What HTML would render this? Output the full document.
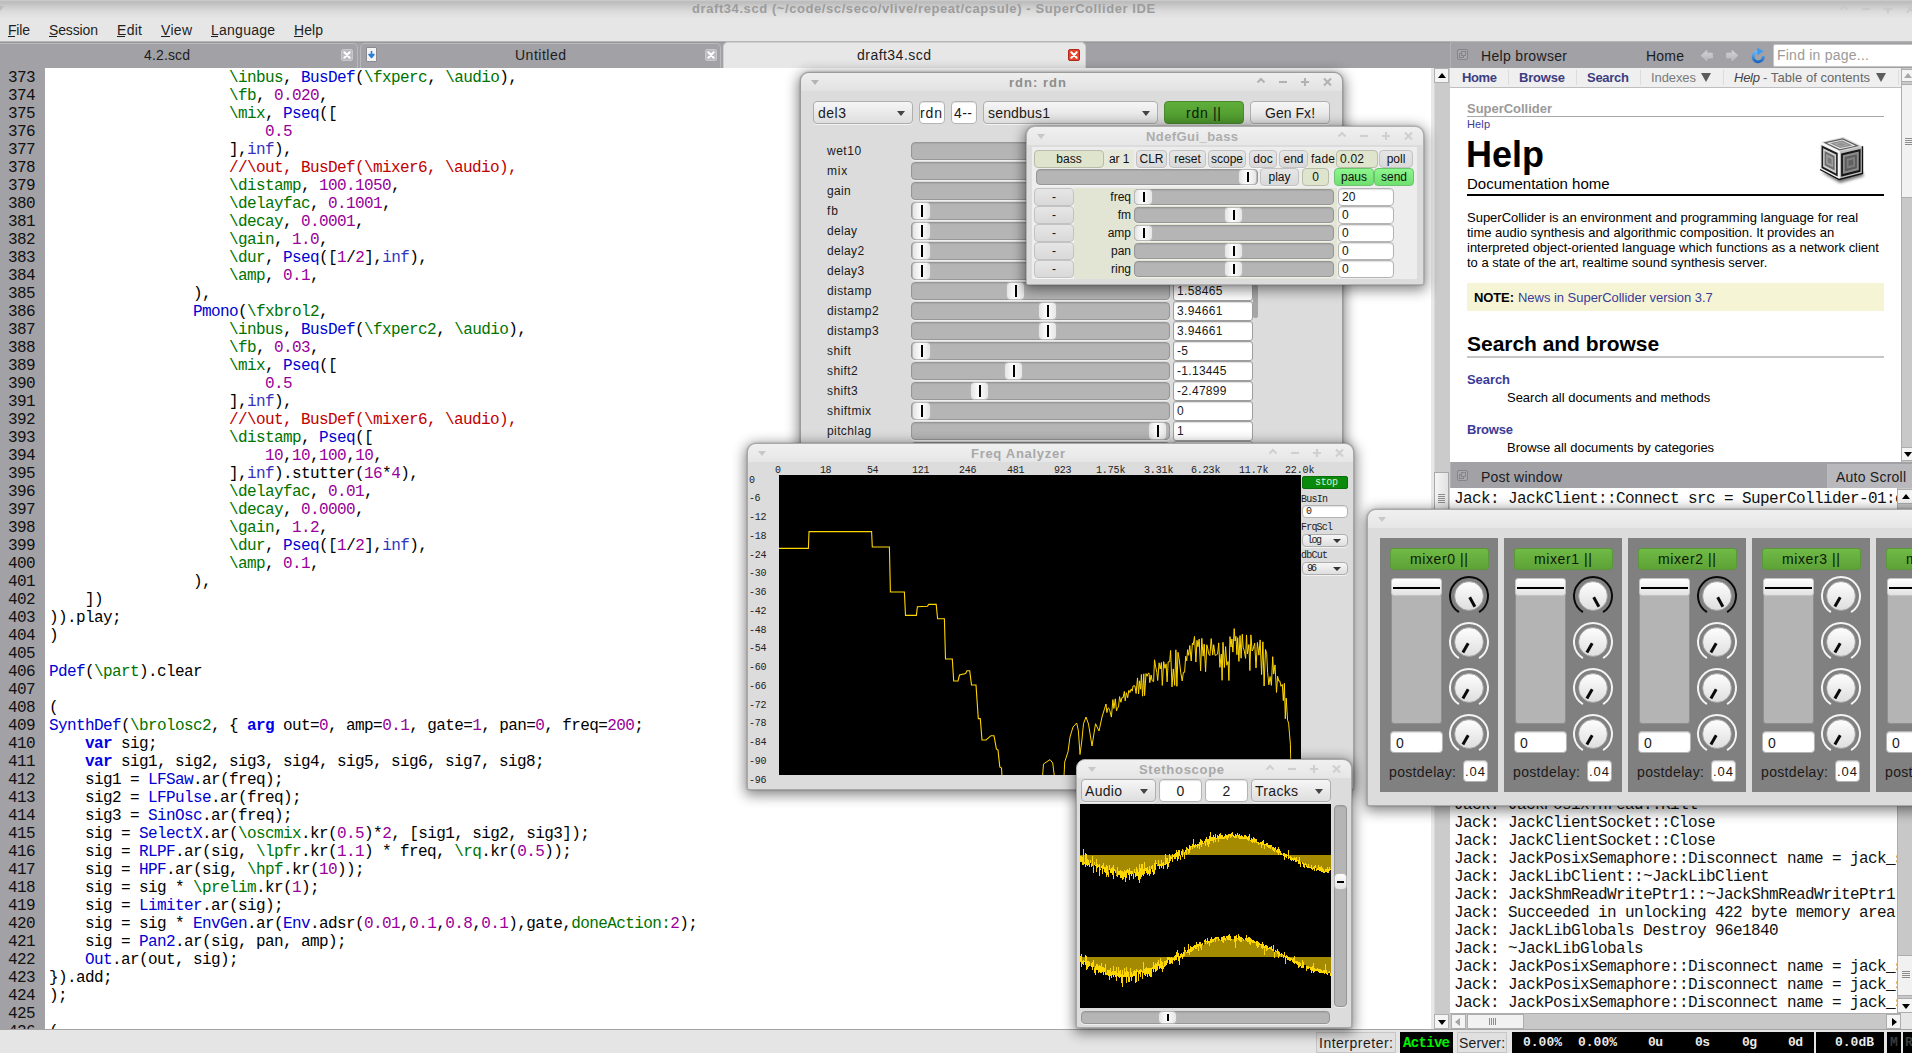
<!DOCTYPE html><html><head><meta charset="utf-8"><title>SuperCollider IDE</title><style>
*{box-sizing:border-box;margin:0;padding:0}
html,body{width:1912px;height:1053px;overflow:hidden;background:#e6e6e6}
body{font-family:"Liberation Sans",sans-serif;position:relative}
i{font-style:normal}
#root{position:absolute;left:0;top:0;width:1912px;height:1053px;overflow:hidden}
.mono{font-family:"Liberation Mono",monospace}
.code{position:absolute;white-space:pre;font-family:"Liberation Mono",monospace;font-size:16px;letter-spacing:-0.6px;line-height:18px;color:#000}
.cm{color:#c00000}.sy{color:#007300}.nu{color:#98009a}.cl{color:#0000d2}.kw{color:#0000e6;font-weight:bold}.bi{color:#3333bf}
.win{position:absolute;background:#dcdcdc;border:1px solid #9c9c9c;border-radius:9px 9px 2px 2px;box-shadow:0 3px 13px 2px rgba(0,0,0,.48),0 0 2px rgba(0,0,0,.35);overflow:hidden}
.wt{position:absolute;left:0;top:0;right:0;height:18px;background:linear-gradient(#eeeeee,#e2e2e2);border-radius:8px 8px 0 0}
.sl{position:absolute;background:#b5b5b5;border:1px solid #979797;border-radius:4px;box-shadow:inset 0 1px 1px rgba(0,0,0,.08),0 1px 0 rgba(255,255,255,.5)}
.kn{position:absolute;background:linear-gradient(90deg,#e4e4e4,#fdfdfd 45%,#e6e6e6);border:1px solid #b9b9b9;border-radius:4px}
.kn:after{content:"";position:absolute;left:50%;top:2px;bottom:2px;width:2px;margin-left:-1px;background:#000}
.fd{position:absolute;background:#fff;border:1px solid #b4b4b4;border-radius:4px;box-shadow:inset 0 1px 1px rgba(0,0,0,.12)}
.bt{position:absolute;background:linear-gradient(#f6f6f6,#dedede);border:1px solid #aeaeae;border-radius:4px;box-shadow:0 1px 0 rgba(255,255,255,.6)}
</style></head><body><div id="root">
<div style="position:absolute;left:0px;top:0px;width:1912px;height:18px;background:linear-gradient(#cfcfcf 0,#bbbbbb 10%,#c9c9c9 32%,#dadada 62%,#e4e4e4 95%);"></div>
<div style="position:absolute;white-space:pre;left:692px;top:1.0px;height:16px;line-height:16px;font-size:13px;color:#9c9c9c;font-weight:bold;letter-spacing:0.58px;">draft34.scd (~/code/sc/seco/vlive/repeat/capsule) - SuperCollider IDE</div>
<svg style="position:absolute;left:1835.5px;top:2px" width="82.5" height="14" viewBox="1835.5 2 82.5 14" fill="none" stroke="#c9c9c9" stroke-width="2.1"><path d="M1840.0 9.5L1843.5 6L1847.0 9.5"/><path d="M1861.5 9H1869.5"/><path d="M1883.5 9H1891.5M1887.5 5V13"/><path d="M1906.5 5.5L1913.5 12.5M1913.5 5.5L1906.5 12.5"/></svg>
<div style="position:absolute;left:-4px;top:6px;width:0px;height:0px;border:4.5px solid transparent;border-top:5px solid #bcbcbc;border-bottom:none;"></div>
<div style="position:absolute;left:0px;top:18px;width:1912px;height:23px;background:#e6e6e6;"></div>
<div style="position:absolute;left:0px;top:41px;width:1912px;height:1px;background:#b4b4b4;"></div>
<div style="position:absolute;white-space:pre;left:8px;top:20.5px;height:18px;line-height:18px;font-size:14px;color:#1e1e1e;letter-spacing:-0.19px;text-decoration:none;">File</div>
<div style="position:absolute;left:8px;top:36px;width:7px;height:1px;background:#1e1e1e;"></div>
<div style="position:absolute;white-space:pre;left:49px;top:20.5px;height:18px;line-height:18px;font-size:14px;color:#1e1e1e;letter-spacing:-0.13px;text-decoration:none;">Session</div>
<div style="position:absolute;left:49px;top:36px;width:8px;height:1px;background:#1e1e1e;"></div>
<div style="position:absolute;white-space:pre;left:117px;top:20.5px;height:18px;line-height:18px;font-size:14px;color:#1e1e1e;letter-spacing:0.29px;text-decoration:none;">Edit</div>
<div style="position:absolute;left:117px;top:36px;width:8px;height:1px;background:#1e1e1e;"></div>
<div style="position:absolute;white-space:pre;left:161px;top:20.5px;height:18px;line-height:18px;font-size:14px;color:#1e1e1e;letter-spacing:0.30px;text-decoration:none;">View</div>
<div style="position:absolute;left:161px;top:36px;width:9px;height:1px;background:#1e1e1e;"></div>
<div style="position:absolute;white-space:pre;left:211px;top:20.5px;height:18px;line-height:18px;font-size:14px;color:#1e1e1e;letter-spacing:0.25px;text-decoration:none;">Language</div>
<div style="position:absolute;left:211px;top:36px;width:7px;height:1px;background:#1e1e1e;"></div>
<div style="position:absolute;white-space:pre;left:294px;top:20.5px;height:18px;line-height:18px;font-size:14px;color:#1e1e1e;letter-spacing:0.07px;text-decoration:none;">Help</div>
<div style="position:absolute;left:294px;top:36px;width:9px;height:1px;background:#1e1e1e;"></div>
<div style="position:absolute;left:0px;top:42px;width:1912px;height:26px;background:#a2a1a6;"></div>
<div style="position:absolute;left:0px;top:42px;width:1912px;height:1px;background:#98979c;"></div>
<div style="position:absolute;left:-5px;top:43px;width:363px;height:25px;border:1px solid #b9b8bd;border-bottom:none;border-radius:5px 5px 0 0;"></div>
<div style="position:absolute;left:360px;top:43px;width:361px;height:25px;border:1px solid #b9b8bd;border-bottom:none;border-radius:5px 5px 0 0;"></div>
<div style="position:absolute;left:723px;top:42px;width:363px;height:26px;background:#e7e7e7;border-radius:5px 5px 0 0;border:1px solid #cfcfcf;border-bottom:none;"></div>
<div style="position:absolute;white-space:pre;left:144px;top:46.0px;height:18px;line-height:18px;font-size:14px;color:#1c1c1c;letter-spacing:0.14px;">4.2.scd</div>
<div style="position:absolute;white-space:pre;left:515px;top:46.0px;height:18px;line-height:18px;font-size:14px;color:#1c1c1c;letter-spacing:0.50px;">Untitled</div>
<div style="position:absolute;white-space:pre;left:857px;top:46.0px;height:18px;line-height:18px;font-size:14px;color:#1c1c1c;letter-spacing:0.47px;">draft34.scd</div>
<div style="position:absolute;left:341px;top:49px;width:12px;height:12px;background:#bcbbbf;border:1px solid #c9c8cc;border-radius:2px;"><svg width="10" height="10" viewBox="0 0 10 10" style="position:absolute;left:0;top:0"><path d="M2.300 2.300L7.700 7.700M7.700 2.300L2.300 7.700" stroke="#fff" stroke-width="2" stroke-linecap="round"/></svg></div>
<div style="position:absolute;left:705px;top:49px;width:12px;height:12px;background:#bcbbbf;border:1px solid #c9c8cc;border-radius:2px;"><svg width="10" height="10" viewBox="0 0 10 10" style="position:absolute;left:0;top:0"><path d="M2.300 2.300L7.700 7.700M7.700 2.300L2.300 7.700" stroke="#fff" stroke-width="2" stroke-linecap="round"/></svg></div>
<div style="position:absolute;left:1068px;top:49px;width:12px;height:12px;background:#e8412c;border:1px solid #b02a1a;border-radius:2px;"><svg width="10" height="10" viewBox="0 0 10 10" style="position:absolute;left:0;top:0"><path d="M2.300 2.300L7.700 7.700M7.700 2.300L2.300 7.700" stroke="#fff" stroke-width="2" stroke-linecap="round"/></svg></div>
<div style="position:absolute;left:366px;top:47px;width:11px;height:15px;background:#f4f4f4;border:1px solid #8a8a90;border-radius:1px;"><svg width="9" height="13" viewBox="0 0 9 13" style="position:absolute;left:0;top:0"><path d="M4.5 3v5M2 6.5l2.5 3l2.5-3z" stroke="#2a7fd4" stroke-width="1.6" fill="#2a7fd4" stroke-linejoin="round"/></svg></div>
<div style="position:absolute;left:0px;top:68px;width:45px;height:961px;background:#a2a1a6;"></div>
<div style="position:absolute;left:45px;top:68px;width:1389px;height:961px;background:#fff;"></div>
<div style="position:absolute;left:0;top:67px;width:1434px;height:962px;overflow:hidden"><div class="code" style="left:8px;top:1.5px;color:#111">373
374
375
376
377
378
379
380
381
382
383
384
385
386
387
388
389
390
391
392
393
394
395
396
397
398
399
400
401
402
403
404
405
406
407
408
409
410
411
412
413
414
415
416
417
418
419
420
421
422
423
424
425
426</div><div class="code" style="left:49px;top:1.5px">                    <i class="sy">\inbus</i>, <i class="cl">BusDef</i>(<i class="sy">\fxperc</i>, <i class="sy">\audio</i>),
                    <i class="sy">\fb</i>, <i class="nu">0.020</i>,
                    <i class="sy">\mix</i>, <i class="cl">Pseq</i>([
                        <i class="nu">0.5</i>
                    ],<i class="bi">inf</i>),
                    <i class="cm">//\out, BusDef(\mixer6, \audio),</i>
                    <i class="sy">\distamp</i>, <i class="nu">100.1050</i>,
                    <i class="sy">\delayfac</i>, <i class="nu">0.1001</i>,
                    <i class="sy">\decay</i>, <i class="nu">0.0001</i>,
                    <i class="sy">\gain</i>, <i class="nu">1.0</i>,
                    <i class="sy">\dur</i>, <i class="cl">Pseq</i>([<i class="nu">1</i>/<i class="nu">2</i>],<i class="bi">inf</i>),
                    <i class="sy">\amp</i>, <i class="nu">0.1</i>,
                ),
                <i class="cl">Pmono</i>(<i class="sy">\fxbrol2</i>,
                    <i class="sy">\inbus</i>, <i class="cl">BusDef</i>(<i class="sy">\fxperc2</i>, <i class="sy">\audio</i>),
                    <i class="sy">\fb</i>, <i class="nu">0.03</i>,
                    <i class="sy">\mix</i>, <i class="cl">Pseq</i>([
                        <i class="nu">0.5</i>
                    ],<i class="bi">inf</i>),
                    <i class="cm">//\out, BusDef(\mixer6, \audio),</i>
                    <i class="sy">\distamp</i>, <i class="cl">Pseq</i>([
                        <i class="nu">10</i>,<i class="nu">10</i>,<i class="nu">100</i>,<i class="nu">10</i>,
                    ],<i class="bi">inf</i>).stutter(<i class="nu">16</i>*<i class="nu">4</i>),
                    <i class="sy">\delayfac</i>, <i class="nu">0.01</i>,
                    <i class="sy">\decay</i>, <i class="nu">0.0000</i>,
                    <i class="sy">\gain</i>, <i class="nu">1.2</i>,
                    <i class="sy">\dur</i>, <i class="cl">Pseq</i>([<i class="nu">1</i>/<i class="nu">2</i>],<i class="bi">inf</i>),
                    <i class="sy">\amp</i>, <i class="nu">0.1</i>,
                ),
    ])
)).play;
)

<i class="cl">Pdef</i>(<i class="sy">\part</i>).clear

(
<i class="cl">SynthDef</i>(<i class="sy">\brolosc2</i>, { <b class="kw">arg</b> out=<i class="nu">0</i>, amp=<i class="nu">0.1</i>, gate=<i class="nu">1</i>, pan=<i class="nu">0</i>, freq=<i class="nu">200</i>;
    <b class="kw">var</b> sig;
    <b class="kw">var</b> sig1, sig2, sig3, sig4, sig5, sig6, sig7, sig8;
    sig1 = <i class="cl">LFSaw</i>.ar(freq);
    sig2 = <i class="cl">LFPulse</i>.ar(freq);
    sig3 = <i class="cl">SinOsc</i>.ar(freq);
    sig = <i class="cl">SelectX</i>.ar(<i class="sy">\oscmix</i>.kr(<i class="nu">0.5</i>)*<i class="nu">2</i>, [sig1, sig2, sig3]);
    sig = <i class="cl">RLPF</i>.ar(sig, <i class="sy">\lpfr</i>.kr(<i class="nu">1.1</i>) * freq, <i class="sy">\rq</i>.kr(<i class="nu">0.5</i>));
    sig = <i class="cl">HPF</i>.ar(sig, <i class="sy">\hpf</i>.kr(<i class="nu">10</i>));
    sig = sig * <i class="sy">\prelim</i>.kr(<i class="nu">1</i>);
    sig = <i class="cl">Limiter</i>.ar(sig);
    sig = sig * <i class="cl">EnvGen</i>.ar(<i class="cl">Env</i>.adsr(<i class="nu">0.01</i>,<i class="nu">0.1</i>,<i class="nu">0.8</i>,<i class="nu">0.1</i>),gate,<i class="sy">doneAction:</i><i class="nu">2</i>);
    sig = <i class="cl">Pan2</i>.ar(sig, pan, amp);
    <i class="cl">Out</i>.ar(out, sig);
}).add;
);

(</div></div>
<div style="position:absolute;left:1434px;top:68px;width:16px;height:961px;background:#cbcbcb;border-left:1px solid #d8d8d8;"></div>
<div style="position:absolute;left:1434px;top:68px;width:15px;height:15px;background:#f4f4f4;border:1px solid #b0b0b0;"><div style="position:absolute;left:3px;top:4px;border:4px solid transparent;border-bottom:5px solid #000;border-top:none"></div></div>
<div style="position:absolute;left:1434px;top:1014px;width:15px;height:15px;background:#f4f4f4;border:1px solid #b0b0b0;"><div style="position:absolute;left:3px;top:5px;border:4px solid transparent;border-top:5px solid #000;border-bottom:none"></div></div>
<div style="position:absolute;left:1434px;top:472px;width:15px;height:53px;background:linear-gradient(90deg,#f4f4f4,#e2e2e2);border:1px solid #a8a8a8;"></div>
<div style="position:absolute;left:1438px;top:494px;width:7px;height:1px;background:#8c8c8c;"></div>
<div style="position:absolute;left:1438px;top:496px;width:7px;height:1px;background:#8c8c8c;"></div>
<div style="position:absolute;left:1438px;top:498px;width:7px;height:1px;background:#8c8c8c;"></div>
<div style="position:absolute;left:1438px;top:500px;width:7px;height:1px;background:#8c8c8c;"></div>
<div style="position:absolute;left:1438px;top:502px;width:7px;height:1px;background:#8c8c8c;"></div>
<div style="position:absolute;left:1431px;top:68px;width:3px;height:961px;background:#e8e8e8;"></div>
<div style="position:absolute;left:0px;top:1029px;width:1912px;height:24px;background:#e5e5e5;border-top:1px solid #a4a4a4;"></div><div style="position:absolute;left:1450px;top:42px;width:462px;height:26px;background:#a2a1a6;border-left:1px solid #b2b1b6;"></div>
<div style="position:absolute;left:1457px;top:49px;width:11px;height:11px;border:1px solid #86858a;border-radius:2px;background:#a8a7ac;"><div style="position:absolute;left:1px;top:3px;width:5px;height:5px;border:1px solid #86858a"></div><div style="position:absolute;left:3px;top:1px;width:5px;height:5px;border:1px solid #86858a;background:#a8a7ac"></div></div>
<div style="position:absolute;white-space:pre;left:1481px;top:46.5px;height:18px;line-height:18px;font-size:14px;color:#1c1c1c;letter-spacing:0.32px;">Help browser</div>
<div style="position:absolute;white-space:pre;left:1646px;top:46.5px;height:18px;line-height:18px;font-size:14px;color:#1c1c1c;letter-spacing:0.22px;">Home</div>
<svg style="position:absolute;left:1700px;top:47px" width="70" height="17" viewBox="0 0 70 17"><defs><linearGradient id="ag" x1="0" y1="0" x2="0" y2="1"><stop offset="0" stop-color="#d6d6d8"/><stop offset="1" stop-color="#b4b4b8"/></linearGradient><linearGradient id="bg" x1="0" y1="0" x2="0" y2="1"><stop offset="0" stop-color="#6ab8ff"/><stop offset="1" stop-color="#1668c4"/></linearGradient></defs><path d="M1 8.5L7 3v3h5.5v5H7v3z" fill="url(#ag)" stroke="#c9c9cc" stroke-width=".6"/><path d="M38 8.5L32 3v3h-5.500v5H32v3z" fill="url(#ag)" stroke="#c9c9cc" stroke-width=".6"/><path d="M63.300 9.200A5.100 5.100 0 1 1 57.800 4.600" fill="none" stroke="url(#bg)" stroke-width="2.800"/><path d="M57 0.500L63.500 4.200L57.500 8.300z" fill="#3d9af0"/></svg>
<div style="position:absolute;left:1773px;top:44px;width:145px;height:23px;background:#fff;border:1px solid #c4c4c4;border-radius:2px;"></div>
<div style="position:absolute;white-space:pre;left:1777px;top:46.0px;height:18px;line-height:18px;font-size:14px;color:#9a9a9a;letter-spacing:0.23px;">Find in page...</div>
<div style="position:absolute;left:1450px;top:68px;width:462px;height:20px;background:#efefef;border-bottom:1px solid #bfbfbf;"></div>
<div style="position:absolute;left:1508px;top:70px;width:1px;height:15px;background:#dcdcdc;"></div>
<div style="position:absolute;left:1576px;top:70px;width:1px;height:15px;background:#dcdcdc;"></div>
<div style="position:absolute;left:1640px;top:70px;width:1px;height:15px;background:#dcdcdc;"></div>
<div style="position:absolute;left:1723px;top:70px;width:1px;height:15px;background:#dcdcdc;"></div>
<div style="position:absolute;left:1898px;top:70px;width:1px;height:15px;background:#dcdcdc;"></div>
<div style="position:absolute;white-space:pre;left:1462px;top:69.5px;height:16px;line-height:16px;font-size:13px;color:#3d3d80;font-weight:bold;letter-spacing:-0.37px;">Home</div>
<div style="position:absolute;white-space:pre;left:1519px;top:69.5px;height:16px;line-height:16px;font-size:13px;color:#3d3d80;font-weight:bold;letter-spacing:-0.19px;">Browse</div>
<div style="position:absolute;white-space:pre;left:1587px;top:69.5px;height:16px;line-height:16px;font-size:13px;color:#3d3d80;font-weight:bold;letter-spacing:-0.27px;">Search</div>
<div style="position:absolute;white-space:pre;left:1651px;top:69.5px;height:16px;line-height:16px;font-size:13px;color:#7a7a7a;letter-spacing:-0.09px;">Indexes</div>
<div style="position:absolute;left:1701px;top:73px;width:0px;height:0px;border:5px solid transparent;border-top:9px solid #5c5c5c;border-bottom:none;"></div>
<div style="position:absolute;white-space:pre;left:1734px;top:69.5px;height:16px;line-height:16px;font-size:13px;color:#444;font-style:italic;letter-spacing:-0.25px;">Help</div>
<div style="position:absolute;white-space:pre;left:1763px;top:69.5px;height:16px;line-height:16px;font-size:13px;color:#666;letter-spacing:0.06px;">- Table of contents</div>
<div style="position:absolute;left:1876px;top:73px;width:0px;height:0px;border:5px solid transparent;border-top:9px solid #5c5c5c;border-bottom:none;"></div>
<div style="position:absolute;left:1450px;top:88px;width:452px;height:374px;background:#fff;"></div>
<div style="position:absolute;white-space:pre;left:1467px;top:100.8px;height:16px;line-height:16px;font-size:13px;color:#9a9a9a;font-weight:bold;letter-spacing:-0.02px;">SuperCollider</div>
<div style="position:absolute;left:1467px;top:116px;width:417px;height:1px;background:#a8a8a8;"></div>
<div style="position:absolute;white-space:pre;left:1467px;top:116.6px;height:14px;line-height:14px;font-size:11px;color:#3b3b98;letter-spacing:0.13px;">Help</div>
<div style="position:absolute;white-space:pre;left:1466px;top:133.5px;height:42px;line-height:42px;font-size:36px;color:#000;font-weight:bold;">Help</div>
<div style="position:absolute;white-space:pre;left:1467px;top:174.0px;height:20px;line-height:20px;font-size:15px;color:#000;">Documentation home</div>
<div style="position:absolute;left:1467px;top:194px;width:417px;height:2px;background:#000;"></div>
<div style="position:absolute;white-space:pre;left:1467px;top:210.0px;height:15px;line-height:15px;font-size:13px;color:#000;letter-spacing:-0.01px;">SuperCollider is an environment and programming language for real</div>
<div style="position:absolute;white-space:pre;left:1467px;top:225.0px;height:15px;line-height:15px;font-size:13px;color:#000;letter-spacing:-0.01px;">time audio synthesis and algorithmic composition. It provides an</div>
<div style="position:absolute;white-space:pre;left:1467px;top:240.0px;height:15px;line-height:15px;font-size:13px;color:#000;letter-spacing:-0.01px;">interpreted object-oriented language which functions as a network client</div>
<div style="position:absolute;white-space:pre;left:1467px;top:255.0px;height:15px;line-height:15px;font-size:13px;color:#000;letter-spacing:-0.02px;">to a state of the art, realtime sound synthesis server.</div>
<div style="position:absolute;left:1467px;top:283px;width:417px;height:28px;background:#f5f5d6;"></div>
<div style="position:absolute;white-space:pre;left:1474px;top:289.5px;height:16px;line-height:16px;font-size:13px;color:#000;font-weight:bold;letter-spacing:-0.11px;">NOTE:</div>
<div style="position:absolute;white-space:pre;left:1518px;top:289.5px;height:16px;line-height:16px;font-size:13px;color:#3b3b98;letter-spacing:-0.03px;">News in SuperCollider version 3.7</div>
<div style="position:absolute;white-space:pre;left:1467px;top:331.0px;height:26px;line-height:26px;font-size:21px;color:#000;font-weight:bold;letter-spacing:-0.03px;">Search and browse</div>
<div style="position:absolute;left:1467px;top:356px;width:417px;height:2px;background:#c6c6c6;"></div>
<div style="position:absolute;white-space:pre;left:1467px;top:371.5px;height:16px;line-height:16px;font-size:13px;color:#3b3b98;font-weight:bold;letter-spacing:-0.07px;">Search</div>
<div style="position:absolute;white-space:pre;left:1507px;top:389.5px;height:16px;line-height:16px;font-size:13px;color:#000;letter-spacing:-0.02px;">Search all documents and methods</div>
<div style="position:absolute;white-space:pre;left:1467px;top:421.5px;height:16px;line-height:16px;font-size:13px;color:#3b3b98;font-weight:bold;letter-spacing:-0.19px;">Browse</div>
<div style="position:absolute;white-space:pre;left:1507px;top:439.5px;height:16px;line-height:16px;font-size:13px;color:#000;letter-spacing:-0.03px;">Browse all documents by categories</div>
<svg style="position:absolute;left:1818px;top:134px" width="50" height="52" viewBox="0 0 50 52"><defs><filter id="cb"><feGaussianBlur stdDeviation="1.4"/></filter></defs><polygon points="3,38 22,49 46,42 44,38 21,40" fill="#000" opacity=".55" filter="url(#cb)"/><polygon points="2.0,8.3 25.2,3.1 44.5,12.3 21.2,17.6" fill="#d8d8d8"/><polygon points="5.4,8.6 24.9,4.3 41.1,12.0 21.5,16.4" fill="#5a5a5a"/><polygon points="8.8,8.9 24.6,5.4 37.7,11.7 21.8,15.3" fill="#e4e4e4"/><polygon points="12.2,9.3 24.3,6.6 34.3,11.4 22.2,14.1" fill="#8a8a8a"/><polygon points="15.6,9.6 23.9,7.7 30.9,11.0 22.5,12.9" fill="#a8a8a8"/><polygon points="19.0,9.9 23.6,8.9 27.5,10.7 22.8,11.8" fill="#8e8e8e"/><polygon points="2.0,8.3 21.2,17.6 21.2,45.5 2.0,35.5" fill="#f2f2f2"/><polygon points="3.5,11.2 19.7,19.1 19.7,42.5 3.5,34.1" fill="#1c1c1c"/><polygon points="5.1,14.2 18.1,20.5 18.1,39.5 5.1,32.7" fill="#d0d0d0"/><polygon points="6.6,17.1 16.6,22.0 16.6,36.5 6.6,31.3" fill="#6c6c6c"/><polygon points="8.1,20.1 15.1,23.4 15.1,33.5 8.1,29.9" fill="#9c9c9c"/><polygon points="9.7,23.0 13.5,24.9 13.5,30.5 9.7,28.5" fill="#7a7a7a"/><polygon points="21.2,17.6 44.5,12.3 44.5,39.5 21.2,45.5" fill="#bdbdbd"/><polygon points="23.1,19.4 42.6,14.9 42.6,37.8 23.1,42.8" fill="#161616"/><polygon points="24.9,21.2 40.8,17.6 40.8,36.1 24.9,40.1" fill="#8c8c8c"/><polygon points="26.8,22.9 38.9,20.2 38.9,34.3 26.8,37.4" fill="#5c5c5c"/><polygon points="28.7,24.7 37.0,22.8 37.0,32.6 28.7,34.8" fill="#7e7e7e"/><polygon points="30.5,26.5 35.2,25.4 35.2,30.9 30.5,32.1" fill="#606060"/><polyline points="2,8.3 21.2,17.6 21.2,45.5" fill="none" stroke="#fafafa" stroke-width="1.2"/><polyline points="2,35.5 21.2,45.5 44.5,39.5 44.5,12.3" fill="none" stroke="#111" stroke-width="1.4"/></svg>
<div style="position:absolute;left:1901px;top:68px;width:12px;height:394px;background:#c8c8c8;border-left:1px solid #adadad;"></div>
<div style="position:absolute;left:1901px;top:69px;width:12px;height:13px;background:#f4f4f4;border:1px solid #adadad;"><div style="position:absolute;left:2px;top:3px;border:4px solid transparent;border-bottom:5px solid #a8a8a8;border-top:none"></div></div>
<div style="position:absolute;left:1901px;top:84px;width:12px;height:114px;background:#f1f1f1;border:1px solid #adadad;"></div>
<div style="position:absolute;left:1905px;top:138px;width:8px;height:1px;background:#8c8c8c;"></div>
<div style="position:absolute;left:1905px;top:140px;width:8px;height:1px;background:#8c8c8c;"></div>
<div style="position:absolute;left:1905px;top:142px;width:8px;height:1px;background:#8c8c8c;"></div>
<div style="position:absolute;left:1905px;top:144px;width:8px;height:1px;background:#8c8c8c;"></div>
<div style="position:absolute;left:1901px;top:447px;width:12px;height:14px;background:#f4f4f4;border:1px solid #adadad;"><div style="position:absolute;left:2px;top:4px;border:4px solid transparent;border-top:5px solid #000;border-bottom:none"></div></div>
<div style="position:absolute;left:1450px;top:462px;width:462px;height:26px;background:#a2a1a6;border-left:1px solid #b2b1b6;"></div>
<div style="position:absolute;left:1457px;top:470px;width:11px;height:11px;border:1px solid #86858a;border-radius:2px;background:#a8a7ac;"><div style="position:absolute;left:1px;top:3px;width:5px;height:5px;border:1px solid #86858a"></div><div style="position:absolute;left:3px;top:1px;width:5px;height:5px;border:1px solid #86858a;background:#a8a7ac"></div></div>
<div style="position:absolute;white-space:pre;left:1481px;top:467.5px;height:18px;line-height:18px;font-size:14px;color:#1c1c1c;letter-spacing:0.24px;">Post window</div>
<div style="position:absolute;left:1827px;top:464px;width:86px;height:24px;background:#b9b8bc;"></div>
<div style="position:absolute;white-space:pre;left:1836px;top:467.5px;height:18px;line-height:18px;font-size:14px;color:#1c1c1c;letter-spacing:0.23px;">Auto Scroll</div>
<div style="position:absolute;left:1450px;top:488px;width:450px;height:525px;background:#fff;"></div>
<div style="position:absolute;left:1450px;top:488px;width:447px;height:525px;overflow:hidden"><div class="code" style="left:4px;top:1.5px;color:#111">Jack: JackClient::Connect src = SuperCollider-01:out_1 dst = system:playback_1
















Jack: JackPosixThread::Kill
Jack: JackClientSocket::Close
Jack: JackClientSocket::Close
Jack: JackPosixSemaphore::Disconnect name = jack_sem.1000_default_SuperCollider
Jack: JackLibClient::~JackLibClient
Jack: JackShmReadWritePtr1::~JackShmReadWritePtr1 1
Jack: Succeeded in unlocking 422 byte memory area
Jack: JackLibGlobals Destroy 96e1840
Jack: ~JackLibGlobals
Jack: JackPosixSemaphore::Disconnect name = jack_sem.1000_default_SuperCollider
Jack: JackPosixSemaphore::Disconnect name = jack_sem.1000_default_SuperCollider
Jack: JackPosixSemaphore::Disconnect name = jack_sem.1000_default_SuperCollider</div></div>
<div style="position:absolute;left:1897px;top:488px;width:16px;height:525px;background:#c8c8c8;border-left:1px solid #adadad;"></div>
<div style="position:absolute;left:1897px;top:489px;width:16px;height:15px;background:#f4f4f4;border:1px solid #adadad;"><div style="position:absolute;left:4px;top:4px;border:4px solid transparent;border-bottom:5px solid #000;border-top:none"></div></div>
<div style="position:absolute;left:1897px;top:955px;width:16px;height:41px;background:#f1f1f1;border:1px solid #adadad;"></div>
<div style="position:absolute;left:1902px;top:971px;width:8px;height:1px;background:#8c8c8c;"></div>
<div style="position:absolute;left:1902px;top:973px;width:8px;height:1px;background:#8c8c8c;"></div>
<div style="position:absolute;left:1902px;top:975px;width:8px;height:1px;background:#8c8c8c;"></div>
<div style="position:absolute;left:1902px;top:977px;width:8px;height:1px;background:#8c8c8c;"></div>
<div style="position:absolute;left:1897px;top:998px;width:16px;height:15px;background:#f4f4f4;border:1px solid #adadad;"><div style="position:absolute;left:4px;top:5px;border:4px solid transparent;border-top:5px solid #000;border-bottom:none"></div></div>
<div style="position:absolute;left:1450px;top:1013px;width:462px;height:16px;background:#c8c8c8;border-top:1px solid #adadad;"></div>
<div style="position:absolute;left:1451px;top:1014px;width:15px;height:15px;background:#f4f4f4;border:1px solid #adadad;"><div style="position:absolute;left:3px;top:3px;border:4px solid transparent;border-right:5px solid #a4a4a4;border-left:none"></div></div>
<div style="position:absolute;left:1467px;top:1014px;width:57px;height:15px;background:#f1f1f1;border:1px solid #adadad;"></div>
<div style="position:absolute;left:1489px;top:1018px;width:1px;height:7px;background:#8c8c8c;"></div>
<div style="position:absolute;left:1491px;top:1018px;width:1px;height:7px;background:#8c8c8c;"></div>
<div style="position:absolute;left:1493px;top:1018px;width:1px;height:7px;background:#8c8c8c;"></div>
<div style="position:absolute;left:1495px;top:1018px;width:1px;height:7px;background:#8c8c8c;"></div>
<div style="position:absolute;left:1886px;top:1014px;width:15px;height:15px;background:#f4f4f4;border:1px solid #adadad;"><div style="position:absolute;left:5px;top:3px;border:4px solid transparent;border-left:5px solid #000;border-right:none"></div></div>
<div style="position:absolute;left:1901px;top:1013px;width:12px;height:16px;background:#e6e6e6;"></div>
<div style="position:absolute;left:1316px;top:1032px;width:80px;height:21px;background:#e0e0e0;border:1px solid #c6c6c6;"></div>
<div style="position:absolute;white-space:pre;left:1319px;top:1033.5px;height:18px;line-height:18px;font-size:14px;color:#1c1c1c;letter-spacing:0.50px;">Interpreter:</div>
<div style="position:absolute;left:1400px;top:1032px;width:53px;height:21px;background:#000;"></div>
<div class="mono" style="position:absolute;white-space:pre;left:1403px;top:1033.5px;height:18px;line-height:18px;font-size:14px;color:#00f000;font-weight:bold;letter-spacing:-0.68px;">Active</div>
<div style="position:absolute;left:1457px;top:1032px;width:50px;height:21px;background:#e0e0e0;border:1px solid #c6c6c6;"></div>
<div style="position:absolute;white-space:pre;left:1459px;top:1033.5px;height:18px;line-height:18px;font-size:14px;color:#1c1c1c;letter-spacing:0.15px;">Server:</div>
<div style="position:absolute;left:1512px;top:1032px;width:372px;height:21px;background:#000;"></div>
<div style="position:absolute;left:1814px;top:1032px;width:2px;height:21px;background:#e6e6e6;"></div>
<div class="mono" style="position:absolute;white-space:pre;left:1523px;top:1034.5px;height:16px;line-height:16px;font-size:13px;color:#ececec;font-weight:bold;letter-spacing:-0.00px;">0.00%</div>
<div class="mono" style="position:absolute;white-space:pre;left:1578px;top:1034.5px;height:16px;line-height:16px;font-size:13px;color:#ececec;font-weight:bold;letter-spacing:-0.00px;">0.00%</div>
<div class="mono" style="position:absolute;white-space:pre;left:1648px;top:1034.5px;height:16px;line-height:16px;font-size:13px;color:#ececec;font-weight:bold;letter-spacing:-0.60px;">0u</div>
<div class="mono" style="position:absolute;white-space:pre;left:1695px;top:1034.5px;height:16px;line-height:16px;font-size:13px;color:#ececec;font-weight:bold;letter-spacing:-0.60px;">0s</div>
<div class="mono" style="position:absolute;white-space:pre;left:1742px;top:1034.5px;height:16px;line-height:16px;font-size:13px;color:#ececec;font-weight:bold;letter-spacing:-0.60px;">0g</div>
<div class="mono" style="position:absolute;white-space:pre;left:1788px;top:1034.5px;height:16px;line-height:16px;font-size:13px;color:#ececec;font-weight:bold;letter-spacing:-0.60px;">0d</div>
<div class="mono" style="position:absolute;white-space:pre;left:1835px;top:1034.5px;height:16px;line-height:16px;font-size:13px;color:#ececec;font-weight:bold;letter-spacing:-0.00px;">0.0dB</div>
<div style="position:absolute;left:1887px;top:1032px;width:14px;height:21px;background:#000;"></div>
<div class="mono" style="position:absolute;white-space:pre;left:1890px;top:1034.5px;height:16px;line-height:16px;font-size:13px;color:#3c3c3c;font-weight:bold;">M</div>
<div style="position:absolute;left:1903px;top:1032px;width:12px;height:21px;background:#000;"></div>
<div class="mono" style="position:absolute;white-space:pre;left:1905px;top:1034.5px;height:16px;line-height:16px;font-size:13px;color:#3c3c3c;font-weight:bold;">R</div><div class="win" style="left:800px;top:72px;width:543px;height:380px"><div class="wt"></div></div>
<div style="position:absolute;left:811px;top:80px;width:0px;height:0px;border:4.5px solid transparent;border-top:5px solid #b4b4b4;border-bottom:none;"></div>
<div style="position:absolute;white-space:pre;left:1009px;top:74.5px;height:16px;line-height:16px;font-size:13px;color:#8e8e8e;font-weight:bold;letter-spacing:1.03px;">rdn: rdn</div>
<svg style="position:absolute;left:1252.5px;top:75px" width="82.5" height="14" viewBox="1252.5 75 82.5 14" fill="none" stroke="#b2b2b2" stroke-width="2.1"><path d="M1257.0 82.5L1260.5 79L1264.0 82.5"/><path d="M1278.5 82H1286.5"/><path d="M1300.5 82H1308.5M1304.5 78V86"/><path d="M1323.5 78.5L1330.5 85.5M1330.5 78.5L1323.5 85.5"/></svg>
<div class="bt" style="position:absolute;left:813px;top:101px;width:100px;height:23px;"></div>
<div style="position:absolute;white-space:pre;left:818px;top:103.5px;height:18px;line-height:18px;font-size:14px;color:#1a1a1a;letter-spacing:0.51px;">del3</div>
<div style="position:absolute;left:897px;top:111px;width:0px;height:0px;border:4.5px solid transparent;border-top:5px solid #444;border-bottom:none;"></div>
<div class="fd" style="position:absolute;left:919px;top:101px;width:26px;height:23px;"></div>
<div style="position:absolute;white-space:pre;left:920px;top:103.5px;height:18px;line-height:18px;font-size:14px;color:#1a1a1a;letter-spacing:0.88px;">rdn</div>
<div class="fd" style="position:absolute;left:951px;top:101px;width:26px;height:23px;"></div>
<div style="position:absolute;white-space:pre;left:954px;top:103.5px;height:18px;line-height:18px;font-size:14px;color:#1a1a1a;letter-spacing:0.45px;">4--</div>
<div class="bt" style="position:absolute;left:983px;top:101px;width:175px;height:23px;"></div>
<div style="position:absolute;white-space:pre;left:988px;top:103.5px;height:18px;line-height:18px;font-size:14px;color:#1a1a1a;letter-spacing:0.18px;">sendbus1</div>
<div style="position:absolute;left:1142px;top:111px;width:0px;height:0px;border:4.5px solid transparent;border-top:5px solid #444;border-bottom:none;"></div>
<div style="position:absolute;left:1164px;top:101px;width:80px;height:23px;background:linear-gradient(#5fae3a,#4c962c);border:1px solid #4a8a2e;border-radius:4px;"></div>
<div style="position:absolute;white-space:pre;left:1186px;top:103.5px;height:18px;line-height:18px;font-size:14px;color:#0c1a08;letter-spacing:0.72px;">rdn ||</div>
<div class="bt" style="position:absolute;left:1250px;top:101px;width:80px;height:23px;"></div>
<div style="position:absolute;white-space:pre;left:1265px;top:103.5px;height:18px;line-height:18px;font-size:14px;color:#1a1a1a;letter-spacing:0.04px;">Gen Fx!</div>
<div style="position:absolute;white-space:pre;left:827px;top:143.5px;height:15px;line-height:15px;font-size:12px;color:#1a1a1a;letter-spacing:0.51px;">wet10</div>
<div class="sl" style="position:absolute;left:911px;top:142px;width:259px;height:18px;"></div>
<div class="fd" style="position:absolute;left:1173px;top:141px;width:80px;height:20px;border-color:#9e9e9e;border-radius:3px;"></div>
<div style="position:absolute;white-space:pre;left:827px;top:163.5px;height:15px;line-height:15px;font-size:12px;color:#1a1a1a;letter-spacing:0.82px;">mix</div>
<div class="sl" style="position:absolute;left:911px;top:162px;width:259px;height:18px;"></div>
<div class="fd" style="position:absolute;left:1173px;top:161px;width:80px;height:20px;border-color:#9e9e9e;border-radius:3px;"></div>
<div style="position:absolute;white-space:pre;left:827px;top:183.5px;height:15px;line-height:15px;font-size:12px;color:#1a1a1a;letter-spacing:0.35px;">gain</div>
<div class="sl" style="position:absolute;left:911px;top:182px;width:259px;height:18px;"></div>
<div class="fd" style="position:absolute;left:1173px;top:181px;width:80px;height:20px;border-color:#9e9e9e;border-radius:3px;"></div>
<div style="position:absolute;white-space:pre;left:827px;top:203.5px;height:15px;line-height:15px;font-size:12px;color:#1a1a1a;letter-spacing:0.85px;">fb</div>
<div class="sl" style="position:absolute;left:911px;top:202px;width:259px;height:18px;"></div><div class="kn" style="position:absolute;left:912px;top:202px;width:19px;height:18px;"></div>
<div class="fd" style="position:absolute;left:1173px;top:201px;width:80px;height:20px;border-color:#9e9e9e;border-radius:3px;"></div>
<div style="position:absolute;white-space:pre;left:827px;top:223.5px;height:15px;line-height:15px;font-size:12px;color:#1a1a1a;letter-spacing:0.34px;">delay</div>
<div class="sl" style="position:absolute;left:911px;top:222px;width:259px;height:18px;"></div><div class="kn" style="position:absolute;left:912px;top:222px;width:19px;height:18px;"></div>
<div class="fd" style="position:absolute;left:1173px;top:221px;width:80px;height:20px;border-color:#9e9e9e;border-radius:3px;"></div>
<div style="position:absolute;white-space:pre;left:827px;top:243.5px;height:15px;line-height:15px;font-size:12px;color:#1a1a1a;letter-spacing:0.34px;">delay2</div>
<div class="sl" style="position:absolute;left:911px;top:242px;width:259px;height:18px;"></div><div class="kn" style="position:absolute;left:912px;top:242px;width:19px;height:18px;"></div>
<div class="fd" style="position:absolute;left:1173px;top:241px;width:80px;height:20px;border-color:#9e9e9e;border-radius:3px;"></div>
<div style="position:absolute;white-space:pre;left:827px;top:263.5px;height:15px;line-height:15px;font-size:12px;color:#1a1a1a;letter-spacing:0.34px;">delay3</div>
<div class="sl" style="position:absolute;left:911px;top:262px;width:259px;height:18px;"></div><div class="kn" style="position:absolute;left:912px;top:262px;width:19px;height:18px;"></div>
<div class="fd" style="position:absolute;left:1173px;top:261px;width:80px;height:20px;border-color:#9e9e9e;border-radius:3px;"></div>
<div style="position:absolute;white-space:pre;left:827px;top:283.5px;height:15px;line-height:15px;font-size:12px;color:#1a1a1a;letter-spacing:0.42px;">distamp</div>
<div class="sl" style="position:absolute;left:911px;top:282px;width:259px;height:18px;"></div><div class="kn" style="position:absolute;left:1006px;top:282px;width:19px;height:18px;"></div>
<div class="fd" style="position:absolute;left:1173px;top:281px;width:80px;height:20px;border-color:#9e9e9e;border-radius:3px;"></div>
<div style="position:absolute;white-space:pre;left:1177px;top:283.5px;height:15px;line-height:15px;font-size:12px;color:#1a1a1a;letter-spacing:0.35px;">1.58465</div>
<div style="position:absolute;white-space:pre;left:827px;top:303.5px;height:15px;line-height:15px;font-size:12px;color:#1a1a1a;letter-spacing:0.41px;">distamp2</div>
<div class="sl" style="position:absolute;left:911px;top:302px;width:259px;height:18px;"></div><div class="kn" style="position:absolute;left:1038px;top:302px;width:19px;height:18px;"></div>
<div class="fd" style="position:absolute;left:1173px;top:301px;width:80px;height:20px;border-color:#9e9e9e;border-radius:3px;"></div>
<div style="position:absolute;white-space:pre;left:1177px;top:303.5px;height:15px;line-height:15px;font-size:12px;color:#1a1a1a;letter-spacing:0.35px;">3.94661</div>
<div style="position:absolute;white-space:pre;left:827px;top:323.5px;height:15px;line-height:15px;font-size:12px;color:#1a1a1a;letter-spacing:0.41px;">distamp3</div>
<div class="sl" style="position:absolute;left:911px;top:322px;width:259px;height:18px;"></div><div class="kn" style="position:absolute;left:1038px;top:322px;width:19px;height:18px;"></div>
<div class="fd" style="position:absolute;left:1173px;top:321px;width:80px;height:20px;border-color:#9e9e9e;border-radius:3px;"></div>
<div style="position:absolute;white-space:pre;left:1177px;top:323.5px;height:15px;line-height:15px;font-size:12px;color:#1a1a1a;letter-spacing:0.35px;">3.94661</div>
<div style="position:absolute;white-space:pre;left:827px;top:343.5px;height:15px;line-height:15px;font-size:12px;color:#1a1a1a;letter-spacing:0.44px;">shift</div>
<div class="sl" style="position:absolute;left:911px;top:342px;width:259px;height:18px;"></div><div class="kn" style="position:absolute;left:912px;top:342px;width:19px;height:18px;"></div>
<div class="fd" style="position:absolute;left:1173px;top:341px;width:80px;height:20px;border-color:#9e9e9e;border-radius:3px;"></div>
<div style="position:absolute;white-space:pre;left:1177px;top:343.5px;height:15px;line-height:15px;font-size:12px;color:#1a1a1a;letter-spacing:0.30px;">-5</div>
<div style="position:absolute;white-space:pre;left:827px;top:363.5px;height:15px;line-height:15px;font-size:12px;color:#1a1a1a;letter-spacing:0.42px;">shift2</div>
<div class="sl" style="position:absolute;left:911px;top:362px;width:259px;height:18px;"></div><div class="kn" style="position:absolute;left:1004px;top:362px;width:19px;height:18px;"></div>
<div class="fd" style="position:absolute;left:1173px;top:361px;width:80px;height:20px;border-color:#9e9e9e;border-radius:3px;"></div>
<div style="position:absolute;white-space:pre;left:1177px;top:363.5px;height:15px;line-height:15px;font-size:12px;color:#1a1a1a;letter-spacing:0.30px;">-1.13445</div>
<div style="position:absolute;white-space:pre;left:827px;top:383.5px;height:15px;line-height:15px;font-size:12px;color:#1a1a1a;letter-spacing:0.42px;">shift3</div>
<div class="sl" style="position:absolute;left:911px;top:382px;width:259px;height:18px;"></div><div class="kn" style="position:absolute;left:970px;top:382px;width:19px;height:18px;"></div>
<div class="fd" style="position:absolute;left:1173px;top:381px;width:80px;height:20px;border-color:#9e9e9e;border-radius:3px;"></div>
<div style="position:absolute;white-space:pre;left:1177px;top:383.5px;height:15px;line-height:15px;font-size:12px;color:#1a1a1a;letter-spacing:0.30px;">-2.47899</div>
<div style="position:absolute;white-space:pre;left:827px;top:403.5px;height:15px;line-height:15px;font-size:12px;color:#1a1a1a;letter-spacing:0.48px;">shiftmix</div>
<div class="sl" style="position:absolute;left:911px;top:402px;width:259px;height:18px;"></div><div class="kn" style="position:absolute;left:912px;top:402px;width:19px;height:18px;"></div>
<div class="fd" style="position:absolute;left:1173px;top:401px;width:80px;height:20px;border-color:#9e9e9e;border-radius:3px;"></div>
<div style="position:absolute;white-space:pre;left:1177px;top:403.5px;height:15px;line-height:15px;font-size:12px;color:#1a1a1a;letter-spacing:0.33px;">0</div>
<div style="position:absolute;white-space:pre;left:827px;top:423.5px;height:15px;line-height:15px;font-size:12px;color:#1a1a1a;letter-spacing:0.40px;">pitchlag</div>
<div class="sl" style="position:absolute;left:911px;top:422px;width:259px;height:18px;"></div><div class="kn" style="position:absolute;left:1148px;top:422px;width:19px;height:18px;"></div>
<div class="fd" style="position:absolute;left:1173px;top:421px;width:80px;height:20px;border-color:#9e9e9e;border-radius:3px;"></div>
<div style="position:absolute;white-space:pre;left:1177px;top:423.5px;height:15px;line-height:15px;font-size:12px;color:#1a1a1a;letter-spacing:0.33px;">1</div>
<div class="sl" style="position:absolute;left:911px;top:442px;width:259px;height:18px;"></div>
<div class="fd" style="position:absolute;left:1173px;top:441px;width:80px;height:20px;border-color:#9e9e9e;border-radius:3px;"></div>
<div style="position:absolute;left:1253px;top:285px;width:5px;height:33px;background:#a6a6a6;border-radius:2px;"></div>
<div class="win" style="left:1026px;top:126px;width:398px;height:159px;border-color:#b0b0b0"><div class="wt" style="background:linear-gradient(#f0f0f0,#e6e6e6)"></div></div>
<div style="position:absolute;left:1032px;top:147px;width:385px;height:132px;background:#ededed;"></div>
<div style="position:absolute;left:1037px;top:134px;width:0px;height:0px;border:4.5px solid transparent;border-top:5px solid #c8c8c8;border-bottom:none;"></div>
<div style="position:absolute;white-space:pre;left:1146px;top:128.5px;height:16px;line-height:16px;font-size:13px;color:#adadad;font-weight:bold;letter-spacing:0.42px;">NdefGui_bass</div>
<svg style="position:absolute;left:1333.5px;top:129px" width="82.5" height="14" viewBox="1333.5 129 82.5 14" fill="none" stroke="#cfcfcf" stroke-width="2.1"><path d="M1338.0 136.5L1341.5 133L1345.0 136.5"/><path d="M1359.5 136H1367.5"/><path d="M1381.5 136H1389.5M1385.5 132V140"/><path d="M1404.5 132.5L1411.5 139.5M1411.5 132.5L1404.5 139.5"/></svg>
<div style="position:absolute;left:1034px;top:150px;width:70px;height:18px;background:#dfe4cd;border:1px solid #b8bca8;border-radius:4px;"></div>
<div style="position:absolute;white-space:pre;left:1034px;top:151.0px;height:16px;line-height:16px;font-size:12px;color:#111;text-align:center;width:70px;">bass</div>
<div style="position:absolute;left:1104px;top:150px;width:30px;height:18px;background:#e6e9da;"></div>
<div style="position:absolute;white-space:pre;left:1109px;top:151.5px;height:15px;line-height:15px;font-size:12px;color:#111;letter-spacing:-0.06px;">ar 1</div>
<div class="bt" style="position:absolute;left:1136px;top:150px;width:31px;height:18px;border-color:#c2c2c2;background:linear-gradient(#e6e6e6,#d9d9d9);"></div><div style="position:absolute;white-space:pre;left:1136px;top:151.0px;height:16px;line-height:16px;font-size:12px;color:#111;text-align:center;width:31px;">CLR</div>
<div class="bt" style="position:absolute;left:1169px;top:150px;width:37px;height:18px;border-color:#c2c2c2;background:linear-gradient(#e6e6e6,#d9d9d9);"></div><div style="position:absolute;white-space:pre;left:1169px;top:151.0px;height:16px;line-height:16px;font-size:12px;color:#111;text-align:center;width:37px;">reset</div>
<div class="bt" style="position:absolute;left:1208px;top:150px;width:38px;height:18px;border-color:#c2c2c2;background:linear-gradient(#e6e6e6,#d9d9d9);"></div><div style="position:absolute;white-space:pre;left:1208px;top:151.0px;height:16px;line-height:16px;font-size:12px;color:#111;text-align:center;width:38px;">scope</div>
<div class="bt" style="position:absolute;left:1249px;top:150px;width:28px;height:18px;border-color:#c2c2c2;background:linear-gradient(#e6e6e6,#d9d9d9);"></div><div style="position:absolute;white-space:pre;left:1249px;top:151.0px;height:16px;line-height:16px;font-size:12px;color:#111;text-align:center;width:28px;">doc</div>
<div class="bt" style="position:absolute;left:1279px;top:150px;width:29px;height:18px;border-color:#c2c2c2;background:linear-gradient(#e6e6e6,#d9d9d9);"></div><div style="position:absolute;white-space:pre;left:1279px;top:151.0px;height:16px;line-height:16px;font-size:12px;color:#111;text-align:center;width:29px;">end</div>
<div style="position:absolute;left:1308px;top:150px;width:28px;height:18px;background:#e6e9da;"></div>
<div style="position:absolute;white-space:pre;left:1311px;top:151.5px;height:15px;line-height:15px;font-size:12px;color:#111;letter-spacing:0.22px;">fade</div>
<div style="position:absolute;left:1336px;top:150px;width:42px;height:18px;background:#dfe4cd;border:1px solid #b8bca8;border-radius:4px;"></div>
<div style="position:absolute;white-space:pre;left:1340px;top:151.5px;height:15px;line-height:15px;font-size:12px;color:#111;letter-spacing:0.22px;">0.02</div>
<div class="bt" style="position:absolute;left:1379px;top:150px;width:34px;height:18px;border-color:#c2c2c2;background:linear-gradient(#e6e6e6,#d9d9d9);"></div><div style="position:absolute;white-space:pre;left:1379px;top:151.0px;height:16px;line-height:16px;font-size:12px;color:#111;text-align:center;width:34px;">poll</div>
<div class="sl" style="position:absolute;left:1036px;top:169px;width:222px;height:16px;"></div><div class="kn" style="position:absolute;left:1238px;top:169px;width:19px;height:16px;"></div>
<div class="bt" style="position:absolute;left:1260px;top:168px;width:39px;height:18px;border-color:#c2c2c2;background:linear-gradient(#e6e6e6,#d9d9d9);"></div><div style="position:absolute;white-space:pre;left:1260px;top:169.0px;height:16px;line-height:16px;font-size:12px;color:#111;text-align:center;width:39px;">play</div>
<div style="position:absolute;left:1302px;top:168px;width:27px;height:18px;background:#dfe4cd;border:1px solid #b8bca8;border-radius:4px;"></div>
<div style="position:absolute;white-space:pre;left:1302px;top:169.0px;height:16px;line-height:16px;font-size:12px;color:#111;text-align:center;width:27px;">0</div>
<div style="position:absolute;left:1334px;top:168px;width:40px;height:18px;background:linear-gradient(#8df58d,#6fe06f);border:1px solid #6cc46c;border-radius:4px;"></div>
<div style="position:absolute;white-space:pre;left:1334px;top:169.0px;height:16px;line-height:16px;font-size:12px;color:#111;text-align:center;width:40px;">paus</div>
<div style="position:absolute;left:1374px;top:168px;width:40px;height:18px;background:linear-gradient(#8df58d,#6fe06f);border:1px solid #6cc46c;border-radius:4px;"></div>
<div style="position:absolute;white-space:pre;left:1374px;top:169.0px;height:16px;line-height:16px;font-size:12px;color:#111;text-align:center;width:40px;">send</div>
<div style="position:absolute;left:1074px;top:188px;width:263px;height:91px;background:#e2e5d4;"></div>
<div class="bt" style="position:absolute;left:1034px;top:188px;width:40px;height:18px;border-color:#c2c2c2;background:linear-gradient(#e6e6e6,#d9d9d9);"></div><div style="position:absolute;white-space:pre;left:1034px;top:189.0px;height:16px;line-height:16px;font-size:12px;color:#111;text-align:center;width:40px;">-</div>
<div style="position:absolute;white-space:pre;left:1074px;top:189.0px;height:16px;line-height:16px;font-size:12px;color:#111;text-align:right;width:57px;">freq</div>
<div class="sl" style="position:absolute;left:1134px;top:189px;width:200px;height:16px;"></div><div class="kn" style="position:absolute;left:1134px;top:189px;width:19px;height:16px;"></div>
<div class="fd" style="position:absolute;left:1338px;top:188px;width:56px;height:18px;"></div>
<div style="position:absolute;white-space:pre;left:1342px;top:189.5px;height:15px;line-height:15px;font-size:12px;color:#111;">20</div>
<div class="bt" style="position:absolute;left:1034px;top:206px;width:40px;height:18px;border-color:#c2c2c2;background:linear-gradient(#e6e6e6,#d9d9d9);"></div><div style="position:absolute;white-space:pre;left:1034px;top:207.0px;height:16px;line-height:16px;font-size:12px;color:#111;text-align:center;width:40px;">-</div>
<div style="position:absolute;white-space:pre;left:1074px;top:207.0px;height:16px;line-height:16px;font-size:12px;color:#111;text-align:right;width:57px;">fm</div>
<div class="sl" style="position:absolute;left:1134px;top:207px;width:200px;height:16px;"></div><div class="kn" style="position:absolute;left:1224px;top:207px;width:19px;height:16px;"></div>
<div class="fd" style="position:absolute;left:1338px;top:206px;width:56px;height:18px;"></div>
<div style="position:absolute;white-space:pre;left:1342px;top:207.5px;height:15px;line-height:15px;font-size:12px;color:#111;">0</div>
<div class="bt" style="position:absolute;left:1034px;top:224px;width:40px;height:18px;border-color:#c2c2c2;background:linear-gradient(#e6e6e6,#d9d9d9);"></div><div style="position:absolute;white-space:pre;left:1034px;top:225.0px;height:16px;line-height:16px;font-size:12px;color:#111;text-align:center;width:40px;">-</div>
<div style="position:absolute;white-space:pre;left:1074px;top:225.0px;height:16px;line-height:16px;font-size:12px;color:#111;text-align:right;width:57px;">amp</div>
<div class="sl" style="position:absolute;left:1134px;top:225px;width:200px;height:16px;"></div><div class="kn" style="position:absolute;left:1134px;top:225px;width:19px;height:16px;"></div>
<div class="fd" style="position:absolute;left:1338px;top:224px;width:56px;height:18px;"></div>
<div style="position:absolute;white-space:pre;left:1342px;top:225.5px;height:15px;line-height:15px;font-size:12px;color:#111;">0</div>
<div class="bt" style="position:absolute;left:1034px;top:242px;width:40px;height:18px;border-color:#c2c2c2;background:linear-gradient(#e6e6e6,#d9d9d9);"></div><div style="position:absolute;white-space:pre;left:1034px;top:243.0px;height:16px;line-height:16px;font-size:12px;color:#111;text-align:center;width:40px;">-</div>
<div style="position:absolute;white-space:pre;left:1074px;top:243.0px;height:16px;line-height:16px;font-size:12px;color:#111;text-align:right;width:57px;">pan</div>
<div class="sl" style="position:absolute;left:1134px;top:243px;width:200px;height:16px;"></div><div class="kn" style="position:absolute;left:1224px;top:243px;width:19px;height:16px;"></div>
<div class="fd" style="position:absolute;left:1338px;top:242px;width:56px;height:18px;"></div>
<div style="position:absolute;white-space:pre;left:1342px;top:243.5px;height:15px;line-height:15px;font-size:12px;color:#111;">0</div>
<div class="bt" style="position:absolute;left:1034px;top:260px;width:40px;height:18px;border-color:#c2c2c2;background:linear-gradient(#e6e6e6,#d9d9d9);"></div><div style="position:absolute;white-space:pre;left:1034px;top:261.0px;height:16px;line-height:16px;font-size:12px;color:#111;text-align:center;width:40px;">-</div>
<div style="position:absolute;white-space:pre;left:1074px;top:261.0px;height:16px;line-height:16px;font-size:12px;color:#111;text-align:right;width:57px;">ring</div>
<div class="sl" style="position:absolute;left:1134px;top:261px;width:200px;height:16px;"></div><div class="kn" style="position:absolute;left:1224px;top:261px;width:19px;height:16px;"></div>
<div class="fd" style="position:absolute;left:1338px;top:260px;width:56px;height:18px;"></div>
<div style="position:absolute;white-space:pre;left:1342px;top:261.5px;height:15px;line-height:15px;font-size:12px;color:#111;">0</div><div class="win" style="left:747px;top:443px;width:607px;height:347px;border-color:#a8a8a8"><div class="wt" style="background:linear-gradient(#f0f0f0,#e6e6e6)"></div></div>
<div style="position:absolute;left:758px;top:451px;width:0px;height:0px;border:4.5px solid transparent;border-top:5px solid #c8c8c8;border-bottom:none;"></div>
<div style="position:absolute;white-space:pre;left:971px;top:445.5px;height:16px;line-height:16px;font-size:13px;color:#a8a8a8;font-weight:bold;letter-spacing:0.71px;">Freq Analyzer</div>
<svg style="position:absolute;left:1264.5px;top:446px" width="82.5" height="14" viewBox="1264.5 446 82.5 14" fill="none" stroke="#cfcfcf" stroke-width="2.1"><path d="M1269.0 453.5L1272.5 450L1276.0 453.5"/><path d="M1290.5 453H1298.5"/><path d="M1312.5 453H1320.5M1316.5 449V457"/><path d="M1335.5 449.5L1342.5 456.5M1342.5 449.5L1335.5 456.5"/></svg>
<div style="position:absolute;left:779px;top:475px;width:522px;height:300px;background:#000;"></div>
<div class="mono" style="position:absolute;white-space:pre;left:775px;top:464.5px;height:12px;line-height:12px;font-size:10px;color:#222;letter-spacing:-0.50px;">0</div>
<div class="mono" style="position:absolute;white-space:pre;left:820px;top:464.5px;height:12px;line-height:12px;font-size:10px;color:#222;letter-spacing:-0.50px;">18</div>
<div class="mono" style="position:absolute;white-space:pre;left:867px;top:464.5px;height:12px;line-height:12px;font-size:10px;color:#222;letter-spacing:-0.50px;">54</div>
<div class="mono" style="position:absolute;white-space:pre;left:912px;top:464.5px;height:12px;line-height:12px;font-size:10px;color:#222;letter-spacing:-0.25px;">121</div>
<div class="mono" style="position:absolute;white-space:pre;left:959px;top:464.5px;height:12px;line-height:12px;font-size:10px;color:#222;letter-spacing:-0.25px;">246</div>
<div class="mono" style="position:absolute;white-space:pre;left:1007px;top:464.5px;height:12px;line-height:12px;font-size:10px;color:#222;letter-spacing:-0.25px;">481</div>
<div class="mono" style="position:absolute;white-space:pre;left:1054px;top:464.5px;height:12px;line-height:12px;font-size:10px;color:#222;letter-spacing:-0.25px;">923</div>
<div class="mono" style="position:absolute;white-space:pre;left:1096px;top:464.5px;height:12px;line-height:12px;font-size:10px;color:#222;letter-spacing:-0.13px;">1.75k</div>
<div class="mono" style="position:absolute;white-space:pre;left:1144px;top:464.5px;height:12px;line-height:12px;font-size:10px;color:#222;letter-spacing:-0.13px;">3.31k</div>
<div class="mono" style="position:absolute;white-space:pre;left:1191px;top:464.5px;height:12px;line-height:12px;font-size:10px;color:#222;letter-spacing:-0.13px;">6.23k</div>
<div class="mono" style="position:absolute;white-space:pre;left:1239px;top:464.5px;height:12px;line-height:12px;font-size:10px;color:#222;letter-spacing:-0.13px;">11.7k</div>
<div class="mono" style="position:absolute;white-space:pre;left:1285px;top:464.5px;height:12px;line-height:12px;font-size:10px;color:#222;letter-spacing:-0.13px;">22.0k</div>
<div class="mono" style="position:absolute;white-space:pre;left:749px;top:474.5px;height:12px;line-height:12px;font-size:10px;color:#222;letter-spacing:-0.50px;">0</div>
<div class="mono" style="position:absolute;white-space:pre;left:749px;top:493.2px;height:12px;line-height:12px;font-size:10px;color:#222;letter-spacing:-0.50px;">-6</div>
<div class="mono" style="position:absolute;white-space:pre;left:749px;top:512.0px;height:12px;line-height:12px;font-size:10px;color:#222;letter-spacing:-0.25px;">-12</div>
<div class="mono" style="position:absolute;white-space:pre;left:749px;top:530.8px;height:12px;line-height:12px;font-size:10px;color:#222;letter-spacing:-0.25px;">-18</div>
<div class="mono" style="position:absolute;white-space:pre;left:749px;top:549.5px;height:12px;line-height:12px;font-size:10px;color:#222;letter-spacing:-0.25px;">-24</div>
<div class="mono" style="position:absolute;white-space:pre;left:749px;top:568.2px;height:12px;line-height:12px;font-size:10px;color:#222;letter-spacing:-0.25px;">-30</div>
<div class="mono" style="position:absolute;white-space:pre;left:749px;top:587.0px;height:12px;line-height:12px;font-size:10px;color:#222;letter-spacing:-0.25px;">-36</div>
<div class="mono" style="position:absolute;white-space:pre;left:749px;top:605.8px;height:12px;line-height:12px;font-size:10px;color:#222;letter-spacing:-0.25px;">-42</div>
<div class="mono" style="position:absolute;white-space:pre;left:749px;top:624.5px;height:12px;line-height:12px;font-size:10px;color:#222;letter-spacing:-0.25px;">-48</div>
<div class="mono" style="position:absolute;white-space:pre;left:749px;top:643.2px;height:12px;line-height:12px;font-size:10px;color:#222;letter-spacing:-0.25px;">-54</div>
<div class="mono" style="position:absolute;white-space:pre;left:749px;top:662.0px;height:12px;line-height:12px;font-size:10px;color:#222;letter-spacing:-0.25px;">-60</div>
<div class="mono" style="position:absolute;white-space:pre;left:749px;top:680.8px;height:12px;line-height:12px;font-size:10px;color:#222;letter-spacing:-0.25px;">-66</div>
<div class="mono" style="position:absolute;white-space:pre;left:749px;top:699.5px;height:12px;line-height:12px;font-size:10px;color:#222;letter-spacing:-0.25px;">-72</div>
<div class="mono" style="position:absolute;white-space:pre;left:749px;top:718.2px;height:12px;line-height:12px;font-size:10px;color:#222;letter-spacing:-0.25px;">-78</div>
<div class="mono" style="position:absolute;white-space:pre;left:749px;top:737.0px;height:12px;line-height:12px;font-size:10px;color:#222;letter-spacing:-0.25px;">-84</div>
<div class="mono" style="position:absolute;white-space:pre;left:749px;top:755.8px;height:12px;line-height:12px;font-size:10px;color:#222;letter-spacing:-0.25px;">-90</div>
<div class="mono" style="position:absolute;white-space:pre;left:749px;top:774.5px;height:12px;line-height:12px;font-size:10px;color:#222;letter-spacing:-0.25px;">-96</div>
<svg style="position:absolute;left:779px;top:475px" width="522" height="300" viewBox="779 475 522 300"><polyline points="779.0,548.4 808.4,548.4 809.0,531.6 871.6,531.6 872.3,547.0 889.4,547.0 890.4,592.0 904.4,592.0 905.5,615.4 916.4,615.4 917.4,606.8 927.4,606.2 928.7,604.4 936.2,604.4 937.6,618.8 944.4,618.8 945.5,659.0 952.3,659.0 953.7,681.0 958.0,681.0 959.5,675.0 965.6,673.5 967.0,670.8 969.7,670.8 971.5,685.0 976.0,685.0 978.3,718.6 980.3,718.6 982.0,740.0 986.0,740.0 991.0,735.7 994.0,735.7 996.4,749.0 998.0,750.0 999.8,767.0 1001.5,768.0 1002.0,777.0" fill="none" stroke="#ffd700" stroke-width="1.1"/><polyline points="1042.5,777.0 1043.5,764.0 1050.0,759.6 1052.7,763.0 1054.5,777.0 1064.0,777.0 1064.7,762.0 1068.0,751.8 1070.0,737.0 1073.0,727.0 1076.7,723.0 1078.4,731.0 1080.0,754.5 1081.8,741.0 1083.5,723.7 1086.0,717.0 1088.5,724.0 1092.0,746.0 1095.5,723.7 1099.0,731.0 1102.0,717.0 1106.0,704.0 1106.9,712.6 1107.7,708.7 1108.6,707.9 1109.9,710.9 1111.4,717.1 1112.9,699.6 1113.9,708.5 1115.3,698.8 1116.5,710.9 1117.4,708.2 1118.5,706.9 1119.6,696.6 1120.9,702.3 1122.0,697.5 1123.0,697.9 1124.4,691.4 1125.2,700.9 1126.4,692.7 1127.7,697.8 1128.8,690.3 1129.9,692.6 1131.2,688.9 1132.2,691.2 1133.0,686.0 1133.8,685.8 1134.9,685.9 1136.1,693.5 1137.5,677.9 1138.6,694.0 1139.5,680.8 1140.6,689.2 1141.4,674.5 1142.6,696.2 1143.8,673.8 1144.6,695.6 1146.0,673.6 1147.1,676.3 1147.9,673.7 1149.0,673.0 1149.8,682.7 1151.1,675.0 1152.1,680.6 1153.6,681.7 1154.5,659.8 1155.5,666.1 1156.9,672.6 1157.7,680.5 1159.1,662.8 1160.2,669.0 1161.4,662.5 1162.3,685.4 1163.7,661.6 1165.0,668.4 1166.1,663.8 1167.1,681.9 1168.2,661.8 1169.7,661.7 1170.6,650.5 1172.0,686.9 1173.3,668.9 1174.7,685.4 1175.9,649.8 1176.9,686.3 1178.0,652.4 1179.3,660.0 1180.7,672.3 1182.2,680.9 1183.4,672.2 1184.6,672.3 1185.7,656.2 1186.7,660.9 1187.6,649.7 1188.7,655.3 1189.8,645.5 1191.2,661.0 1192.4,643.1 1193.2,644.8 1194.5,636.4 1195.9,662.0 1197.0,640.3 1197.9,646.9 1199.2,639.1 1200.6,670.8 1201.8,638.4 1203.1,656.2 1204.2,644.1 1205.6,671.7 1206.8,644.8 1207.7,648.0 1208.6,653.8 1209.9,655.6 1211.2,638.6 1212.7,655.1 1213.7,644.7 1215.1,655.4 1216.3,654.9 1217.6,654.1 1218.7,642.9 1219.9,667.4 1221.3,654.1 1222.1,680.3 1223.0,642.3 1224.4,667.5 1225.6,646.6 1226.8,665.2 1228.1,661.5 1228.9,680.5 1230.0,636.6 1231.0,647.0 1231.9,639.0 1232.9,652.1 1234.2,628.6 1235.1,641.0 1235.9,636.3 1236.9,654.7 1237.7,637.7 1238.9,661.4 1240.0,635.6 1241.1,658.2 1242.3,634.2 1243.2,647.9 1244.1,650.0 1245.6,658.4 1246.5,634.9 1247.4,654.0 1248.9,644.5 1249.9,670.6 1250.9,634.9 1252.1,651.0 1252.9,650.0 1253.7,647.0 1254.7,643.1 1256.0,667.9 1257.4,642.5 1258.9,655.2 1260.1,639.9 1261.6,674.6 1262.9,641.8 1264.1,686.0 1265.5,649.5 1266.7,653.6 1267.6,672.2 1268.8,684.8 1270.1,676.5 1271.4,685.4 1272.7,656.7 1273.7,674.1 1275.0,664.9 1276.5,692.4 1277.6,676.2 1278.8,681.2 1279.8,680.9 1281.0,686.3 1282.3,684.4 1283.3,700.6 1284.4,683.4 1285.3,718.8 1286.2,698.0 1287.6,720.4 1288.6,723.1 1289.5,734.1 1290.4,744.2 1291.0,777.0" fill="none" stroke="#ffd700" stroke-width="1" stroke-linejoin="bevel"/></svg>
<div style="position:absolute;left:1302px;top:476px;width:46px;height:13px;background:#0a8a0a;border:1px solid #0a6e0a;border-radius:2px;"></div>
<div class="mono" style="position:absolute;white-space:pre;left:1315px;top:477.0px;height:12px;line-height:12px;font-size:10px;color:#d8f0d8;letter-spacing:-0.34px;">stop</div>
<div class="mono" style="position:absolute;white-space:pre;left:1301px;top:494.0px;height:12px;line-height:12px;font-size:10px;color:#222;letter-spacing:-0.75px;">BusIn</div>
<div class="fd" style="position:absolute;left:1302px;top:505px;width:46px;height:13px;"></div>
<div class="mono" style="position:absolute;white-space:pre;left:1306px;top:506.0px;height:12px;line-height:12px;font-size:10px;color:#222;">0</div>
<div class="mono" style="position:absolute;white-space:pre;left:1301px;top:522.0px;height:12px;line-height:12px;font-size:10px;color:#222;letter-spacing:-0.80px;">FrqScl</div>
<div class="bt" style="position:absolute;left:1302px;top:534px;width:46px;height:13px;"></div>
<div class="mono" style="position:absolute;white-space:pre;left:1307px;top:535.0px;height:12px;line-height:12px;font-size:10px;color:#222;letter-spacing:-1.50px;">log</div>
<div style="position:absolute;left:1333px;top:539px;width:0px;height:0px;border:4px solid transparent;border-top:4.5px solid #333;border-bottom:none;"></div>
<div class="mono" style="position:absolute;white-space:pre;left:1301px;top:550.0px;height:12px;line-height:12px;font-size:10px;color:#222;letter-spacing:-0.75px;">dbCut</div>
<div class="bt" style="position:absolute;left:1302px;top:562px;width:46px;height:13px;"></div>
<div class="mono" style="position:absolute;white-space:pre;left:1307px;top:563.0px;height:12px;line-height:12px;font-size:10px;color:#222;letter-spacing:-2.00px;">96</div>
<div style="position:absolute;left:1333px;top:567px;width:0px;height:0px;border:4px solid transparent;border-top:4.5px solid #333;border-bottom:none;"></div>
<div class="win" style="left:1076px;top:759px;width:276px;height:269px;border-color:#a8a8a8"><div class="wt" style="background:linear-gradient(#f0f0f0,#e6e6e6)"></div></div>
<div style="position:absolute;left:1088px;top:767px;width:0px;height:0px;border:4.5px solid transparent;border-top:5px solid #c8c8c8;border-bottom:none;"></div>
<div style="position:absolute;white-space:pre;left:1139px;top:761.5px;height:16px;line-height:16px;font-size:13px;color:#a8a8a8;font-weight:bold;letter-spacing:0.70px;">Stethoscope</div>
<svg style="position:absolute;left:1261.5px;top:762px" width="82.5" height="14" viewBox="1261.5 762 82.5 14" fill="none" stroke="#cfcfcf" stroke-width="2.1"><path d="M1266.0 769.5L1269.5 766L1273.0 769.5"/><path d="M1287.5 769H1295.5"/><path d="M1309.5 769H1317.5M1313.5 765V773"/><path d="M1332.5 765.5L1339.5 772.5M1339.5 765.5L1332.5 772.5"/></svg>
<div class="bt" style="position:absolute;left:1081px;top:779px;width:75px;height:23px;"></div>
<div style="position:absolute;white-space:pre;left:1085px;top:782.0px;height:18px;line-height:18px;font-size:14px;color:#1a1a1a;letter-spacing:0.30px;">Audio</div>
<div style="position:absolute;left:1140px;top:789px;width:0px;height:0px;border:4.5px solid transparent;border-top:5px solid #444;border-bottom:none;"></div>
<div class="fd" style="position:absolute;left:1159px;top:779px;width:43px;height:23px;"></div>
<div style="position:absolute;white-space:pre;left:1159px;top:782.0px;height:18px;line-height:18px;font-size:14px;color:#1a1a1a;text-align:center;width:43px;">0</div>
<div class="fd" style="position:absolute;left:1205px;top:779px;width:43px;height:23px;"></div>
<div style="position:absolute;white-space:pre;left:1205px;top:782.0px;height:18px;line-height:18px;font-size:14px;color:#1a1a1a;text-align:center;width:43px;">2</div>
<div class="bt" style="position:absolute;left:1251px;top:779px;width:80px;height:23px;"></div>
<div style="position:absolute;white-space:pre;left:1255px;top:782.0px;height:18px;line-height:18px;font-size:14px;color:#1a1a1a;letter-spacing:0.30px;">Tracks</div>
<div style="position:absolute;left:1315px;top:789px;width:0px;height:0px;border:4.5px solid transparent;border-top:5px solid #444;border-bottom:none;"></div>
<div style="position:absolute;left:1080px;top:804px;width:251px;height:204px;background:#000;"></div>
<svg style="position:absolute;left:1080px;top:804px" width="251" height="204" viewBox="1080 804 251 204" shape-rendering="crispEdges"><path d="M1080.5 855.0V861.7M1081.5 855.0V862.3M1082.5 855.0V864.6M1083.5 848.7V865.3M1084.5 855.0V864.3M1085.5 853.2V867.1M1086.5 854.1V864.8M1087.5 855.0V865.8M1088.5 855.0V864.8M1089.5 855.0V867.3M1090.5 855.0V862.9M1091.5 855.0V867.1M1092.5 855.0V866.0M1093.5 855.0V872.6M1094.5 855.0V865.1M1095.5 855.0V866.0M1096.5 855.0V871.5M1097.5 855.0V868.0M1098.5 855.0V867.3M1099.5 855.0V875.7M1100.5 855.0V869.5M1101.5 855.0V868.2M1102.5 855.0V873.6M1103.5 855.0V868.8M1104.5 855.0V872.4M1105.5 855.0V873.2M1106.5 855.0V877.0M1107.5 855.0V874.9M1108.5 855.0V877.1M1109.5 855.0V869.7M1110.5 855.0V873.2M1111.5 855.0V872.5M1112.5 855.0V875.1M1113.5 855.0V879.0M1114.5 855.0V871.2M1115.5 855.0V872.6M1116.5 855.0V876.3M1117.5 855.0V876.9M1118.5 855.0V871.1M1119.5 855.0V875.4M1120.5 855.0V877.5M1121.5 855.0V878.2M1122.5 855.0V879.9M1123.5 855.0V879.3M1124.5 855.0V876.6M1125.5 855.0V881.8M1126.5 855.0V877.7M1127.5 855.0V872.7M1128.5 855.0V874.9M1129.5 855.0V880.2M1130.5 855.0V874.4M1131.5 855.0V876.2M1132.5 855.0V874.2M1133.5 855.0V879.2M1134.5 855.0V873.0M1135.5 855.0V876.7M1136.5 855.0V875.5M1137.5 855.0V875.7M1138.5 855.0V880.2M1139.5 855.0V882.8M1140.5 855.0V879.1M1141.5 855.0V876.9M1142.5 855.0V874.6M1143.5 855.0V876.0M1144.5 855.0V873.7M1145.5 855.0V871.2M1146.5 855.0V873.1M1147.5 855.0V874.6M1148.5 855.0V873.5M1149.5 855.0V875.7M1150.5 855.0V873.6M1151.5 855.0V869.4M1152.5 855.0V871.9M1153.5 855.0V875.4M1154.5 855.0V873.7M1155.5 855.0V869.6M1156.5 855.0V864.4M1157.5 855.0V866.4M1158.5 855.0V865.6M1159.5 855.0V868.6M1160.5 855.0V863.6M1161.5 855.0V868.0M1162.5 855.0V866.4M1163.5 855.0V869.3M1164.5 855.0V865.3M1165.5 853.9V864.8M1166.5 855.0V864.1M1167.5 855.0V868.7M1168.5 855.0V867.1M1169.5 853.7V862.6M1170.5 855.0V861.4M1171.5 855.0V858.6M1172.5 853.5V861.8M1173.5 854.8V857.1M1174.5 854.0V858.6M1175.5 853.3V859.1M1176.5 850.3V856.9M1177.5 852.3V860.9M1178.5 850.2V859.0M1179.5 850.4V856.4M1180.5 855.0V859.8M1181.5 851.2V855.0M1182.5 849.4V857.3M1183.5 849.7V855.0M1184.5 852.0V859.1M1185.5 849.9V855.0M1186.5 846.5V855.0M1187.5 848.1V855.0M1188.5 848.8V855.0M1189.5 844.8V855.0M1190.5 846.1V855.0M1191.5 846.0V855.0M1192.5 844.3V855.0M1193.5 839.2V855.0M1194.5 845.4V855.0M1195.5 843.8V855.0M1196.5 844.5V855.0M1197.5 843.8V855.0M1198.5 844.1V855.0M1199.5 841.9V855.0M1200.5 838.9V855.0M1201.5 840.4V855.0M1202.5 841.0V855.0M1203.5 843.1V855.0M1204.5 842.5V855.0M1205.5 838.9V855.0M1206.5 837.3V855.0M1207.5 838.8V855.0M1208.5 838.6V855.0M1209.5 835.8V855.0M1210.5 831.7V855.0M1211.5 837.4V855.0M1212.5 836.6V855.0M1213.5 834.9V855.0M1214.5 837.3V855.0M1215.5 834.0V855.0M1216.5 837.9V855.0M1217.5 835.1V855.0M1218.5 835.6V855.0M1219.5 833.8V855.0M1220.5 833.0V855.0M1221.5 835.4V855.0M1222.5 834.9V855.0M1223.5 837.1V855.0M1224.5 836.4V855.0M1225.5 834.0V855.0M1226.5 834.7V855.0M1227.5 834.8V855.0M1228.5 833.8V855.0M1229.5 834.3V855.0M1230.5 834.3V855.0M1231.5 833.4V855.0M1232.5 832.3V855.0M1233.5 835.2V855.0M1234.5 835.5V855.0M1235.5 834.1V855.0M1236.5 834.5V855.0M1237.5 832.6V855.0M1238.5 835.1V855.0M1239.5 833.9V855.0M1240.5 835.6V855.0M1241.5 834.9V855.0M1242.5 835.8V855.0M1243.5 837.4V855.0M1244.5 835.4V855.0M1245.5 835.2V855.0M1246.5 836.1V855.0M1247.5 837.4V855.0M1248.5 835.5V855.0M1249.5 834.4V855.0M1250.5 839.7V855.0M1251.5 837.6V855.0M1252.5 838.5V855.0M1253.5 836.8V855.0M1254.5 837.7V855.0M1255.5 838.8V855.0M1256.5 839.3V855.0M1257.5 841.6V855.0M1258.5 841.5V855.0M1259.5 842.9V855.0M1260.5 842.0V855.0M1261.5 842.0V855.0M1262.5 840.8V855.0M1263.5 840.1V855.0M1264.5 843.6V855.0M1265.5 845.1V855.0M1266.5 842.8V855.0M1267.5 843.3V855.0M1268.5 845.4V855.0M1269.5 845.2V855.0M1270.5 845.4V855.0M1271.5 845.3V855.0M1272.5 846.6V855.0M1273.5 846.5V855.0M1274.5 847.6V855.0M1275.5 847.0V855.0M1276.5 850.4V855.0M1277.5 848.8V855.0M1278.5 847.2V855.0M1279.5 848.6V855.0M1280.5 851.1V855.0M1281.5 853.1V855.0M1282.5 854.1V855.0M1283.5 852.8V856.1M1284.5 852.9V859.5M1285.5 854.3V857.0M1286.5 854.2V857.7M1287.5 855.0V855.5M1288.5 849.6V858.8M1289.5 855.0V858.2M1290.5 855.0V859.7M1291.5 855.0V860.5M1292.5 855.0V860.4M1293.5 855.0V860.8M1294.5 855.0V859.8M1295.5 855.0V862.0M1296.5 855.0V861.8M1297.5 855.0V861.0M1298.5 855.0V863.8M1299.5 855.0V863.6M1300.5 855.0V867.0M1301.5 855.0V862.2M1302.5 855.0V863.5M1303.5 855.0V866.9M1304.5 855.0V867.9M1305.5 855.0V865.1M1306.5 855.0V867.4M1307.5 855.0V867.5M1308.5 855.0V867.7M1309.5 855.0V867.8M1310.5 855.0V866.9M1311.5 855.0V868.7M1312.5 855.0V870.2M1313.5 855.0V868.8M1314.5 855.0V870.9M1315.5 855.0V867.5M1316.5 855.0V870.5M1317.5 855.0V870.3M1318.5 855.0V869.7M1319.5 855.0V871.0M1320.5 855.0V871.2M1321.5 855.0V871.7M1322.5 855.0V871.6M1323.5 855.0V872.5M1324.5 855.0V873.2M1325.5 855.0V872.1M1326.5 855.0V872.1M1327.5 855.0V872.9M1328.5 855.0V873.1M1329.5 855.0V870.9M1330.5 855.0V870.3" stroke="#a38a00" stroke-width="1"/><path d="M1080.5 855.6V861.7M1081.5 856.2V862.3M1082.5 857.1V864.6M1083.5 848.7V865.3M1084.5 862.4V864.3M1085.5 853.2V867.1M1086.5 854.1V864.8M1087.5 859.3V865.8M1088.5 859.8V864.8M1089.5 862.8V867.3M1090.5 859.9V862.9M1091.5 863.9V867.1M1092.5 856.4V866.0M1093.5 867.3V872.6M1094.5 861.6V865.1M1095.5 864.6V866.0M1096.5 859.4V871.5M1097.5 864.0V868.0M1098.5 864.9V867.3M1099.5 863.7V875.7M1100.5 868.5V869.5M1101.5 866.1V868.2M1102.5 864.8V873.6M1103.5 862.5V868.8M1104.5 867.0V872.4M1105.5 867.1V873.2M1106.5 864.8V877.0M1107.5 865.6V874.9M1108.5 872.4V877.1M1109.5 864.9V869.7M1110.5 869.4V873.2M1111.5 867.8V872.5M1112.5 867.4V875.1M1113.5 865.3V879.0M1114.5 869.3V871.2M1115.5 869.7V872.6M1116.5 874.7V876.3M1117.5 867.1V876.9M1118.5 871.1V874.7M1119.5 871.3V875.4M1120.5 870.3V877.5M1121.5 871.2V878.2M1122.5 871.1V879.9M1123.5 872.3V879.3M1124.5 870.2V876.6M1125.5 870.9V881.8M1126.5 870.2V877.7M1127.5 869.2V872.7M1128.5 870.4V874.9M1129.5 867.8V880.2M1130.5 871.0V874.4M1131.5 870.8V876.2M1132.5 870.7V874.2M1133.5 873.7V879.2M1134.5 869.2V873.0M1135.5 872.4V876.7M1136.5 867.2V875.5M1137.5 869.2V875.7M1138.5 871.7V880.2M1139.5 864.2V882.8M1140.5 868.0V879.1M1141.5 863.6V876.9M1142.5 863.8V874.6M1143.5 868.5V876.0M1144.5 862.3V873.7M1145.5 868.4V871.2M1146.5 867.9V873.1M1147.5 866.5V874.6M1148.5 870.4V873.5M1149.5 866.4V875.7M1150.5 868.8V873.6M1151.5 865.8V869.4M1152.5 865.3V871.9M1153.5 869.5V875.4M1154.5 863.4V873.7M1155.5 859.9V869.6M1156.5 863.2V864.4M1157.5 864.7V866.4M1158.5 859.5V865.6M1159.5 864.3V868.6M1160.5 863.6V865.7M1161.5 859.9V868.0M1162.5 862.9V866.4M1163.5 862.4V869.3M1164.5 864.1V865.3M1165.5 853.9V864.8M1166.5 858.3V864.1M1167.5 857.8V868.7M1168.5 861.7V867.1M1169.5 853.7V862.6M1170.5 856.1V861.4M1171.5 856.9V858.6M1172.5 853.5V861.8M1173.5 854.8V857.1M1174.5 854.0V858.6M1175.5 853.3V859.1M1176.5 850.3V856.9M1177.5 852.3V860.9M1178.5 850.2V859.0M1179.5 850.4V856.4M1180.5 856.0V859.8M1181.5 851.2V854.8M1182.5 849.4V857.3M1183.5 849.7V849.9M1184.5 852.0V859.1M1185.5 849.9V852.5M1186.5 846.5V854.5M1187.5 848.1V850.0M1188.5 848.8V853.6M1189.5 844.8V852.7M1190.5 846.1V849.8M1191.5 846.0V846.7M1192.5 844.3V848.8M1193.5 839.2V847.1M1194.5 845.4V848.3M1195.5 843.8V847.4M1196.5 844.5V846.2M1197.5 843.8V847.5M1198.5 844.1V846.3M1199.5 841.9V849.4M1200.5 838.9V844.8M1201.5 840.4V846.8M1202.5 841.0V844.2M1203.5 843.1V843.9M1204.5 840.8V842.5M1205.5 838.9V845.6M1206.5 837.3V841.8M1207.5 838.8V844.6M1208.5 838.6V847.3M1209.5 835.8V843.6M1210.5 831.7V841.1M1211.5 837.4V840.8M1212.5 836.6V840.8M1213.5 834.9V842.8M1214.5 837.3V839.8M1215.5 834.0V842.4M1216.5 837.9V839.4M1217.5 835.1V839.2M1218.5 835.6V841.6M1219.5 833.8V839.0M1220.5 833.0V838.7M1221.5 835.4V838.5M1222.5 834.9V839.2M1223.5 837.1V838.8M1224.5 836.4V839.0M1225.5 834.0V838.4M1226.5 834.7V838.6M1227.5 834.8V839.8M1228.5 833.8V837.7M1229.5 834.3V835.7M1230.5 834.3V837.9M1231.5 833.4V837.4M1232.5 832.3V836.1M1233.5 835.2V836.8M1234.5 835.5V837.6M1235.5 834.1V837.9M1236.5 834.5V837.7M1237.5 832.6V836.1M1238.5 835.1V837.7M1239.5 833.9V838.6M1240.5 835.6V838.8M1241.5 834.9V839.1M1242.5 835.8V838.8M1243.5 837.4V838.9M1244.5 835.4V839.0M1245.5 835.2V839.1M1246.5 836.1V839.4M1247.5 837.4V839.9M1248.5 835.5V840.9M1249.5 834.4V840.4M1250.5 839.7V840.9M1251.5 837.6V841.9M1252.5 838.5V843.1M1253.5 836.8V842.3M1254.5 837.7V842.8M1255.5 838.8V842.1M1256.5 839.3V842.7M1257.5 841.6V843.0M1258.5 841.5V844.6M1259.5 842.9V844.1M1260.5 842.0V844.3M1261.5 842.0V847.5M1262.5 840.8V845.2M1263.5 840.1V845.3M1264.5 843.6V848.8M1265.5 844.2V845.1M1266.5 842.8V846.3M1267.5 843.3V846.5M1268.5 845.4V847.7M1269.5 845.2V847.9M1270.5 845.4V849.1M1271.5 845.3V847.3M1272.5 846.6V850.1M1273.5 846.5V850.9M1274.5 847.6V852.2M1275.5 847.0V850.4M1276.5 850.4V852.3M1277.5 848.8V852.8M1278.5 847.2V854.5M1279.5 848.6V853.3M1280.5 851.1V854.5M1281.5 853.1V854.6M1282.5 853.7V854.1M1283.5 852.8V856.1M1284.5 852.9V859.5M1285.5 854.3V857.0M1286.5 854.2V857.7M1287.5 855.1V855.5M1288.5 849.6V858.8M1289.5 856.8V858.2M1290.5 856.1V859.7M1291.5 856.7V860.5M1292.5 857.9V860.4M1293.5 858.3V860.8M1294.5 856.8V859.8M1295.5 857.6V862.0M1296.5 857.3V861.8M1297.5 859.6V861.0M1298.5 860.1V863.8M1299.5 857.2V863.6M1300.5 861.5V867.0M1301.5 861.6V862.2M1302.5 862.1V863.5M1303.5 863.2V866.9M1304.5 863.5V867.9M1305.5 863.1V865.1M1306.5 863.5V867.4M1307.5 866.1V867.5M1308.5 863.5V867.7M1309.5 866.7V867.8M1310.5 866.9V867.5M1311.5 865.3V868.7M1312.5 868.3V870.2M1313.5 867.1V868.8M1314.5 866.3V870.9M1315.5 864.5V867.5M1316.5 869.0V870.5M1317.5 867.7V870.3M1318.5 864.7V869.7M1319.5 867.4V871.0M1320.5 867.2V871.2M1321.5 865.6V871.7M1322.5 868.3V871.6M1323.5 868.8V872.5M1324.5 871.3V873.2M1325.5 868.6V872.1M1326.5 868.8V872.1M1327.5 866.7V872.9M1328.5 869.1V873.1M1329.5 867.0V870.9M1330.5 869.1V870.3" stroke="#ffd700" stroke-width="1"/><path d="M1080.5 955.7V962.4M1081.5 953.7V967.4M1082.5 956.6V964.2M1083.5 956.6V964.9M1084.5 956.6V962.3M1085.5 954.5V964.5M1086.5 956.3V969.8M1087.5 956.6V969.2M1088.5 956.6V967.4M1089.5 956.6V966.1M1090.5 956.6V966.4M1091.5 956.6V966.6M1092.5 956.6V969.8M1093.5 956.6V966.5M1094.5 956.6V973.3M1095.5 956.6V974.9M1096.5 956.6V970.4M1097.5 956.6V970.1M1098.5 956.6V972.6M1099.5 956.6V971.6M1100.5 956.6V973.3M1101.5 956.6V973.3M1102.5 956.6V972.3M1103.5 956.6V975.4M1104.5 956.6V972.2M1105.5 956.6V974.6M1106.5 956.6V975.0M1107.5 956.6V974.9M1108.5 956.6V975.6M1109.5 956.6V980.3M1110.5 956.6V976.4M1111.5 956.6V978.1M1112.5 956.6V974.9M1113.5 956.6V977.0M1114.5 956.6V974.8M1115.5 956.6V977.1M1116.5 956.6V980.9M1117.5 956.6V976.0M1118.5 956.6V976.9M1119.5 956.6V977.9M1120.5 956.6V976.5M1121.5 956.6V983.3M1122.5 956.6V986.7M1123.5 956.6V975.3M1124.5 956.6V976.6M1125.5 956.6V977.2M1126.5 956.6V983.4M1127.5 956.6V976.8M1128.5 956.6V982.1M1129.5 956.6V981.9M1130.5 956.6V977.4M1131.5 956.6V981.1M1132.5 956.6V977.4M1133.5 956.6V975.5M1134.5 956.6V975.7M1135.5 956.6V982.6M1136.5 956.6V981.6M1137.5 956.6V972.0M1138.5 956.6V980.7M1139.5 956.6V974.0M1140.5 956.6V977.4M1141.5 956.6V972.4M1142.5 956.6V979.4M1143.5 956.6V972.9M1144.5 956.6V975.3M1145.5 956.6V976.1M1146.5 956.6V973.6M1147.5 956.6V977.2M1148.5 956.6V974.3M1149.5 956.6V975.7M1150.5 956.6V977.1M1151.5 956.6V977.4M1152.5 956.6V968.8M1153.5 956.6V971.8M1154.5 956.6V969.1M1155.5 956.6V971.8M1156.5 956.6V970.7M1157.5 956.6V970.4M1158.5 956.6V965.8M1159.5 956.6V969.4M1160.5 956.6V968.4M1161.5 956.6V969.1M1162.5 956.6V972.4M1163.5 956.6V969.0M1164.5 956.6V966.8M1165.5 956.6V966.1M1166.5 956.6V965.1M1167.5 956.6V963.3M1168.5 956.6V959.5M1169.5 956.6V964.3M1170.5 956.6V963.8M1171.5 956.6V962.7M1172.5 956.6V963.5M1173.5 956.6V959.6M1174.5 955.6V961.2M1175.5 955.0V959.5M1176.5 952.2V960.4M1177.5 949.9V956.6M1178.5 953.3V960.9M1179.5 955.7V964.7M1180.5 954.1V957.9M1181.5 952.6V957.0M1182.5 953.6V959.4M1183.5 951.5V956.9M1184.5 946.9V956.6M1185.5 949.6V956.6M1186.5 952.7V956.6M1187.5 949.8V956.6M1188.5 944.0V956.6M1189.5 949.2V956.6M1190.5 945.5V956.6M1191.5 947.1V956.6M1192.5 946.9V956.6M1193.5 946.4V956.6M1194.5 944.6V956.6M1195.5 944.8V956.6M1196.5 942.4V956.6M1197.5 944.0V956.6M1198.5 943.5V956.6M1199.5 941.7V956.6M1200.5 942.2V956.6M1201.5 943.8V956.6M1202.5 942.5V956.6M1203.5 944.7V956.6M1204.5 940.3V956.6M1205.5 939.1V956.6M1206.5 940.7V956.6M1207.5 937.7V956.6M1208.5 940.6V956.6M1209.5 940.5V956.6M1210.5 939.2V956.6M1211.5 936.5V956.6M1212.5 938.5V956.6M1213.5 938.7V956.6M1214.5 937.8V956.6M1215.5 937.0V956.6M1216.5 936.5V956.6M1217.5 937.4V956.6M1218.5 936.9V956.6M1219.5 938.7V956.6M1220.5 939.5V956.6M1221.5 936.6V956.6M1222.5 936.9V956.6M1223.5 936.2V956.6M1224.5 936.1V956.6M1225.5 937.9V956.6M1226.5 936.1V956.6M1227.5 936.0V956.6M1228.5 935.1V956.6M1229.5 933.5V956.6M1230.5 936.0V956.6M1231.5 938.6V956.6M1232.5 938.6V956.6M1233.5 938.6V956.6M1234.5 936.2V956.6M1235.5 936.1V956.6M1236.5 935.4V956.6M1237.5 937.7V956.6M1238.5 934.3V956.6M1239.5 935.7V956.6M1240.5 936.6V956.6M1241.5 936.6V956.6M1242.5 938.2V956.6M1243.5 938.5V956.6M1244.5 940.0V956.6M1245.5 938.1V956.6M1246.5 935.2V956.6M1247.5 937.5V956.6M1248.5 936.8V956.6M1249.5 936.9V956.6M1250.5 937.8V956.6M1251.5 939.0V956.6M1252.5 939.7V956.6M1253.5 939.8V956.6M1254.5 940.7V956.6M1255.5 942.1V956.6M1256.5 940.9V956.6M1257.5 941.4V956.6M1258.5 941.7V956.6M1259.5 942.5V956.6M1260.5 944.3V956.6M1261.5 944.1V956.6M1262.5 941.6V956.6M1263.5 943.7V956.6M1264.5 946.1V956.6M1265.5 944.6V956.6M1266.5 945.4V956.6M1267.5 945.6V956.6M1268.5 949.0V956.6M1269.5 947.0V956.6M1270.5 947.1V956.6M1271.5 945.8V956.6M1272.5 949.0V956.6M1273.5 945.1V956.6M1274.5 951.6V957.9M1275.5 949.9V956.6M1276.5 950.5V956.6M1277.5 949.1V956.6M1278.5 950.8V957.7M1279.5 952.1V956.6M1280.5 954.0V956.6M1281.5 953.1V956.8M1282.5 953.7V956.6M1283.5 955.0V958.2M1284.5 952.4V956.6M1285.5 955.6V963.8M1286.5 955.3V957.6M1287.5 956.4V960.1M1288.5 956.6V960.3M1289.5 956.6V961.4M1290.5 956.6V961.3M1291.5 956.6V959.5M1292.5 956.6V962.3M1293.5 956.6V962.6M1294.5 955.8V963.9M1295.5 956.6V961.0M1296.5 956.6V964.3M1297.5 956.6V964.7M1298.5 956.6V968.2M1299.5 956.6V966.5M1300.5 956.6V965.5M1301.5 956.6V967.7M1302.5 956.6V967.8M1303.5 956.6V967.5M1304.5 956.6V965.1M1305.5 956.6V965.4M1306.5 956.6V971.1M1307.5 956.6V968.8M1308.5 956.6V969.2M1309.5 956.6V967.6M1310.5 956.6V970.0M1311.5 956.6V972.6M1312.5 956.6V970.5M1313.5 956.6V972.5M1314.5 956.6V971.6M1315.5 956.6V971.4M1316.5 956.6V970.6M1317.5 956.6V970.8M1318.5 956.6V972.2M1319.5 956.6V972.6M1320.5 956.6V973.2M1321.5 956.6V973.0M1322.5 956.6V973.0M1323.5 956.6V973.4M1324.5 956.6V973.5M1325.5 956.6V973.2M1326.5 956.6V973.8M1327.5 956.6V974.7M1328.5 956.6V973.1M1329.5 956.6V972.5M1330.5 956.6V976.2" stroke="#a38a00" stroke-width="1"/><path d="M1080.5 955.7V962.4M1081.5 953.7V967.4M1082.5 961.2V964.2M1083.5 960.2V964.9M1084.5 961.2V962.3M1085.5 954.5V964.5M1086.5 956.3V969.8M1087.5 960.5V969.2M1088.5 960.6V967.4M1089.5 961.9V966.1M1090.5 965.8V966.4M1091.5 962.9V966.6M1092.5 961.5V969.8M1093.5 959.5V966.5M1094.5 967.8V973.3M1095.5 965.6V974.9M1096.5 963.6V970.4M1097.5 963.5V970.1M1098.5 965.7V972.6M1099.5 964.9V971.6M1100.5 965.8V973.3M1101.5 963.4V973.3M1102.5 966.6V972.3M1103.5 967.0V975.4M1104.5 968.4V972.2M1105.5 964.0V974.6M1106.5 973.0V975.0M1107.5 969.7V974.9M1108.5 969.6V975.6M1109.5 969.9V980.3M1110.5 967.7V976.4M1111.5 972.0V978.1M1112.5 970.6V974.9M1113.5 966.1V977.0M1114.5 970.5V974.8M1115.5 971.1V977.1M1116.5 967.4V980.9M1117.5 973.3V976.0M1118.5 967.1V976.9M1119.5 970.5V977.9M1120.5 969.5V976.5M1121.5 974.3V983.3M1122.5 970.3V986.7M1123.5 975.3V977.2M1124.5 967.5V976.6M1125.5 971.9V977.2M1126.5 967.4V983.4M1127.5 970.5V976.8M1128.5 972.0V982.1M1129.5 977.0V981.9M1130.5 967.7V977.4M1131.5 972.0V981.1M1132.5 974.3V977.4M1133.5 971.1V975.5M1134.5 969.6V975.7M1135.5 971.3V982.6M1136.5 969.3V981.6M1137.5 969.9V972.0M1138.5 970.5V980.7M1139.5 970.2V974.0M1140.5 968.9V977.4M1141.5 969.8V972.4M1142.5 971.4V979.4M1143.5 962.1V972.9M1144.5 969.2V975.3M1145.5 967.7V976.1M1146.5 966.8V973.6M1147.5 968.1V977.2M1148.5 967.5V974.3M1149.5 967.7V975.7M1150.5 967.9V977.1M1151.5 967.5V977.4M1152.5 966.9V968.8M1153.5 961.9V971.8M1154.5 964.6V969.1M1155.5 962.8V971.8M1156.5 964.2V970.7M1157.5 962.0V970.4M1158.5 960.0V965.8M1159.5 963.6V969.4M1160.5 958.0V968.4M1161.5 961.2V969.1M1162.5 962.2V972.4M1163.5 965.7V969.0M1164.5 960.8V966.8M1165.5 961.1V966.1M1166.5 959.9V965.1M1167.5 956.7V963.3M1168.5 957.3V959.5M1169.5 956.8V964.3M1170.5 958.1V963.8M1171.5 956.6V962.7M1172.5 957.7V963.5M1173.5 958.4V959.6M1174.5 955.6V961.2M1175.5 955.0V959.5M1176.5 952.2V960.4M1177.5 949.9V956.5M1178.5 953.3V960.9M1179.5 955.7V964.7M1180.5 954.1V957.9M1181.5 952.6V957.0M1182.5 953.6V959.4M1183.5 951.5V956.9M1184.5 946.9V955.7M1185.5 949.6V951.5M1186.5 952.1V952.7M1187.5 949.8V952.9M1188.5 944.0V953.0M1189.5 949.2V954.7M1190.5 945.5V951.5M1191.5 947.1V951.9M1192.5 946.9V950.6M1193.5 946.4V950.3M1194.5 944.6V948.2M1195.5 944.8V948.9M1196.5 942.4V948.5M1197.5 944.0V947.1M1198.5 943.5V950.8M1199.5 941.7V945.9M1200.5 942.2V948.1M1201.5 943.8V950.2M1202.5 942.5V945.2M1203.5 944.7V945.3M1204.5 940.3V942.4M1205.5 939.1V944.3M1206.5 940.7V941.5M1207.5 937.7V943.8M1208.5 940.6V943.3M1209.5 940.5V945.7M1210.5 939.2V943.2M1211.5 936.5V942.5M1212.5 938.5V942.4M1213.5 938.7V941.6M1214.5 937.8V939.7M1215.5 937.0V942.0M1216.5 936.5V939.3M1217.5 937.4V938.1M1218.5 936.9V940.6M1219.5 938.7V940.1M1220.5 939.5V940.2M1221.5 936.6V940.6M1222.5 936.9V942.2M1223.5 936.2V942.5M1224.5 936.1V939.9M1225.5 937.9V941.0M1226.5 936.1V937.8M1227.5 936.0V939.7M1228.5 935.1V939.5M1229.5 933.5V939.5M1230.5 936.0V941.4M1231.5 938.6V939.9M1232.5 938.6V939.2M1233.5 938.6V939.3M1234.5 936.2V941.5M1235.5 936.1V947.7M1236.5 935.4V940.6M1237.5 937.7V938.6M1238.5 934.3V939.8M1239.5 935.7V940.9M1240.5 936.6V941.8M1241.5 936.6V941.8M1242.5 938.2V938.7M1243.5 938.5V940.7M1244.5 939.8V940.0M1245.5 938.1V939.9M1246.5 935.2V940.9M1247.5 937.5V941.6M1248.5 936.8V942.1M1249.5 936.9V944.2M1250.5 937.8V945.0M1251.5 939.0V942.2M1252.5 939.7V942.8M1253.5 939.8V943.2M1254.5 940.7V942.8M1255.5 942.1V943.4M1256.5 940.9V946.4M1257.5 941.4V948.4M1258.5 941.7V947.4M1259.5 942.5V944.8M1260.5 944.3V945.3M1261.5 944.1V947.7M1262.5 941.6V948.6M1263.5 943.7V947.8M1264.5 946.1V954.5M1265.5 944.6V948.2M1266.5 945.4V951.2M1267.5 945.6V950.4M1268.5 947.6V949.0M1269.5 947.0V949.3M1270.5 947.1V949.2M1271.5 945.8V949.9M1272.5 949.0V951.0M1273.5 945.1V950.6M1274.5 951.6V957.9M1275.5 949.9V951.6M1276.5 950.5V952.3M1277.5 949.1V954.4M1278.5 950.8V957.7M1279.5 952.1V955.5M1280.5 954.0V954.7M1281.5 953.1V956.8M1282.5 953.7V954.5M1283.5 955.0V958.2M1284.5 952.4V956.6M1285.5 955.6V963.8M1286.5 955.3V957.6M1287.5 956.4V960.1M1288.5 957.0V960.3M1289.5 957.0V961.4M1290.5 957.8V961.3M1291.5 958.4V959.5M1292.5 958.9V962.3M1293.5 957.6V962.6M1294.5 955.8V963.9M1295.5 961.0V962.8M1296.5 960.6V964.3M1297.5 961.4V964.7M1298.5 961.7V968.2M1299.5 961.6V966.5M1300.5 962.5V965.5M1301.5 965.7V967.7M1302.5 960.3V967.8M1303.5 961.6V967.5M1304.5 964.5V965.1M1305.5 964.8V965.4M1306.5 965.5V971.1M1307.5 966.4V968.8M1308.5 965.8V969.2M1309.5 966.8V967.6M1310.5 966.9V970.0M1311.5 966.5V972.6M1312.5 966.3V970.5M1313.5 962.7V972.5M1314.5 967.7V971.6M1315.5 968.5V971.4M1316.5 969.1V970.6M1317.5 968.4V970.8M1318.5 968.9V972.2M1319.5 968.9V972.6M1320.5 969.0V973.2M1321.5 970.2V973.0M1322.5 971.0V973.0M1323.5 970.1V973.4M1324.5 970.1V973.5M1325.5 964.4V973.2M1326.5 970.4V973.8M1327.5 972.8V974.7M1328.5 971.5V973.1M1329.5 970.8V972.5M1330.5 972.6V976.2" stroke="#ffd700" stroke-width="1"/></svg>
<div class="sl" style="position:absolute;left:1334px;top:805px;width:13px;height:202px;"></div>
<div style="position:absolute;left:1334px;top:873px;width:13px;height:17px;background:linear-gradient(#fdfdfd,#e4e4e4);border:1px solid #b9b9b9;border-radius:4px;"><div style="position:absolute;left:2px;right:2px;top:6.5px;height:2px;background:#000"></div></div>
<div class="sl" style="position:absolute;left:1081px;top:1011px;width:249px;height:13px;"></div><div class="kn" style="position:absolute;left:1158px;top:1011px;width:19px;height:13px;"></div>
<div class="win" style="left:1367px;top:509px;width:560px;height:297px;border-color:#a8a8a8"><div class="wt" style="background:linear-gradient(#f0f0f0,#e6e6e6)"></div></div>
<div style="position:absolute;left:1378px;top:517px;width:0px;height:0px;border:4.5px solid transparent;border-top:5px solid #c8c8c8;border-bottom:none;"></div>
<div style="position:absolute;left:1380px;top:538px;width:118px;height:254px;background:#808080;"></div>
<div style="position:absolute;left:1390px;top:548px;width:99px;height:22px;background:linear-gradient(#70ba46,#5da236);border:1px solid #5a973a;border-radius:3px;"></div>
<div style="position:absolute;white-space:pre;left:1410px;top:550.0px;height:18px;line-height:18px;font-size:14px;color:#0c1a08;letter-spacing:0.60px;">mixer0 ||</div>
<div style="position:absolute;left:1391px;top:578px;width:51px;height:146px;background:#b4b4b4;border:1px solid #8f8f8f;border-radius:3px;"></div>
<div style="position:absolute;left:1391px;top:578px;width:51px;height:18px;background:linear-gradient(#ffffff,#e2e2e2);border:1px solid #c4c4c4;border-radius:3px;"><div style="position:absolute;left:1px;right:1px;top:7.5px;height:2px;background:#000"></div></div>
<div class="fd" style="position:absolute;left:1390px;top:731px;width:53px;height:22px;"></div>
<div style="position:absolute;white-space:pre;left:1396px;top:733.5px;height:18px;line-height:18px;font-size:14px;color:#1a1a1a;">0</div>
<div style="position:absolute;white-space:pre;left:1389px;top:762.5px;height:18px;line-height:18px;font-size:14px;color:#1a1a1a;letter-spacing:0.35px;">postdelay:</div>
<div class="fd" style="position:absolute;left:1463px;top:760px;width:25px;height:22px;"></div>
<div style="position:absolute;white-space:pre;left:1465px;top:763.5px;height:16px;line-height:16px;font-size:13px;color:#1a1a1a;letter-spacing:0.96px;">.04</div>
<div style="position:absolute;left:1504px;top:538px;width:118px;height:254px;background:#808080;"></div>
<div style="position:absolute;left:1514px;top:548px;width:99px;height:22px;background:linear-gradient(#70ba46,#5da236);border:1px solid #5a973a;border-radius:3px;"></div>
<div style="position:absolute;white-space:pre;left:1534px;top:550.0px;height:18px;line-height:18px;font-size:14px;color:#0c1a08;letter-spacing:0.60px;">mixer1 ||</div>
<div style="position:absolute;left:1515px;top:578px;width:51px;height:146px;background:#b4b4b4;border:1px solid #8f8f8f;border-radius:3px;"></div>
<div style="position:absolute;left:1515px;top:578px;width:51px;height:18px;background:linear-gradient(#ffffff,#e2e2e2);border:1px solid #c4c4c4;border-radius:3px;"><div style="position:absolute;left:1px;right:1px;top:7.5px;height:2px;background:#000"></div></div>
<div class="fd" style="position:absolute;left:1514px;top:731px;width:53px;height:22px;"></div>
<div style="position:absolute;white-space:pre;left:1520px;top:733.5px;height:18px;line-height:18px;font-size:14px;color:#1a1a1a;">0</div>
<div style="position:absolute;white-space:pre;left:1513px;top:762.5px;height:18px;line-height:18px;font-size:14px;color:#1a1a1a;letter-spacing:0.35px;">postdelay:</div>
<div class="fd" style="position:absolute;left:1587px;top:760px;width:25px;height:22px;"></div>
<div style="position:absolute;white-space:pre;left:1589px;top:763.5px;height:16px;line-height:16px;font-size:13px;color:#1a1a1a;letter-spacing:0.96px;">.04</div>
<div style="position:absolute;left:1628px;top:538px;width:118px;height:254px;background:#808080;"></div>
<div style="position:absolute;left:1638px;top:548px;width:99px;height:22px;background:linear-gradient(#70ba46,#5da236);border:1px solid #5a973a;border-radius:3px;"></div>
<div style="position:absolute;white-space:pre;left:1658px;top:550.0px;height:18px;line-height:18px;font-size:14px;color:#0c1a08;letter-spacing:0.60px;">mixer2 ||</div>
<div style="position:absolute;left:1639px;top:578px;width:51px;height:146px;background:#b4b4b4;border:1px solid #8f8f8f;border-radius:3px;"></div>
<div style="position:absolute;left:1639px;top:578px;width:51px;height:18px;background:linear-gradient(#ffffff,#e2e2e2);border:1px solid #c4c4c4;border-radius:3px;"><div style="position:absolute;left:1px;right:1px;top:7.5px;height:2px;background:#000"></div></div>
<div class="fd" style="position:absolute;left:1638px;top:731px;width:53px;height:22px;"></div>
<div style="position:absolute;white-space:pre;left:1644px;top:733.5px;height:18px;line-height:18px;font-size:14px;color:#1a1a1a;">0</div>
<div style="position:absolute;white-space:pre;left:1637px;top:762.5px;height:18px;line-height:18px;font-size:14px;color:#1a1a1a;letter-spacing:0.35px;">postdelay:</div>
<div class="fd" style="position:absolute;left:1711px;top:760px;width:25px;height:22px;"></div>
<div style="position:absolute;white-space:pre;left:1713px;top:763.5px;height:16px;line-height:16px;font-size:13px;color:#1a1a1a;letter-spacing:0.96px;">.04</div>
<div style="position:absolute;left:1752px;top:538px;width:118px;height:254px;background:#808080;"></div>
<div style="position:absolute;left:1762px;top:548px;width:99px;height:22px;background:linear-gradient(#70ba46,#5da236);border:1px solid #5a973a;border-radius:3px;"></div>
<div style="position:absolute;white-space:pre;left:1782px;top:550.0px;height:18px;line-height:18px;font-size:14px;color:#0c1a08;letter-spacing:0.60px;">mixer3 ||</div>
<div style="position:absolute;left:1763px;top:578px;width:51px;height:146px;background:#b4b4b4;border:1px solid #8f8f8f;border-radius:3px;"></div>
<div style="position:absolute;left:1763px;top:578px;width:51px;height:18px;background:linear-gradient(#ffffff,#e2e2e2);border:1px solid #c4c4c4;border-radius:3px;"><div style="position:absolute;left:1px;right:1px;top:7.5px;height:2px;background:#000"></div></div>
<div class="fd" style="position:absolute;left:1762px;top:731px;width:53px;height:22px;"></div>
<div style="position:absolute;white-space:pre;left:1768px;top:733.5px;height:18px;line-height:18px;font-size:14px;color:#1a1a1a;">0</div>
<div style="position:absolute;white-space:pre;left:1761px;top:762.5px;height:18px;line-height:18px;font-size:14px;color:#1a1a1a;letter-spacing:0.35px;">postdelay:</div>
<div class="fd" style="position:absolute;left:1835px;top:760px;width:25px;height:22px;"></div>
<div style="position:absolute;white-space:pre;left:1837px;top:763.5px;height:16px;line-height:16px;font-size:13px;color:#1a1a1a;letter-spacing:0.96px;">.04</div>
<div style="position:absolute;left:1876px;top:538px;width:118px;height:254px;background:#808080;"></div>
<div style="position:absolute;left:1886px;top:548px;width:99px;height:22px;background:linear-gradient(#70ba46,#5da236);border:1px solid #5a973a;border-radius:3px;"></div>
<div style="position:absolute;white-space:pre;left:1906px;top:550.0px;height:18px;line-height:18px;font-size:14px;color:#0c1a08;letter-spacing:0.60px;">mixer4 ||</div>
<div style="position:absolute;left:1887px;top:578px;width:51px;height:146px;background:#b4b4b4;border:1px solid #8f8f8f;border-radius:3px;"></div>
<div style="position:absolute;left:1887px;top:578px;width:51px;height:18px;background:linear-gradient(#ffffff,#e2e2e2);border:1px solid #c4c4c4;border-radius:3px;"><div style="position:absolute;left:1px;right:1px;top:7.5px;height:2px;background:#000"></div></div>
<div class="fd" style="position:absolute;left:1886px;top:731px;width:53px;height:22px;"></div>
<div style="position:absolute;white-space:pre;left:1892px;top:733.5px;height:18px;line-height:18px;font-size:14px;color:#1a1a1a;">0</div>
<div style="position:absolute;white-space:pre;left:1885px;top:762.5px;height:18px;line-height:18px;font-size:14px;color:#1a1a1a;letter-spacing:0.35px;">postdelay:</div>
<div class="fd" style="position:absolute;left:1959px;top:760px;width:25px;height:22px;"></div>
<div style="position:absolute;white-space:pre;left:1961px;top:763.5px;height:16px;line-height:16px;font-size:13px;color:#1a1a1a;letter-spacing:0.96px;">.04</div>
<svg style="position:absolute;left:1367px;top:527px" width="545" height="278" viewBox="1367 527 545 278"><defs><linearGradient id="kg" x1="0" y1="0" x2="0" y2="1"><stop offset="0" stop-color="#fefefe"/><stop offset="1" stop-color="#dedede"/></linearGradient></defs><path d="M1458.9 612.1A19.0 19.0 0 1 1 1479.1 612.1" fill="none" stroke="#0a0a0a" stroke-width="2"/><circle cx="1469" cy="596" r="14.4" fill="url(#kg)" stroke="#9a9a9a" stroke-width=".8"/><path d="M1469.7 597.3L1474.9 606.7" stroke="#0a0a0a" stroke-width="3" stroke-linecap="butt"/><path d="M1458.9 658.1A19.0 19.0 0 1 1 1479.1 658.1" fill="none" stroke="#f4f4f4" stroke-width="2"/><circle cx="1469" cy="642" r="14.4" fill="url(#kg)" stroke="#9a9a9a" stroke-width=".8"/><path d="M1468.2 643.3L1462.9 652.6" stroke="#0a0a0a" stroke-width="3" stroke-linecap="butt"/><path d="M1458.9 704.1A19.0 19.0 0 1 1 1479.1 704.1" fill="none" stroke="#f4f4f4" stroke-width="2"/><circle cx="1469" cy="688" r="14.4" fill="url(#kg)" stroke="#9a9a9a" stroke-width=".8"/><path d="M1468.2 689.3L1462.9 698.6" stroke="#0a0a0a" stroke-width="3" stroke-linecap="butt"/><path d="M1458.9 750.1A19.0 19.0 0 1 1 1479.1 750.1" fill="none" stroke="#f4f4f4" stroke-width="2"/><circle cx="1469" cy="734" r="14.4" fill="url(#kg)" stroke="#9a9a9a" stroke-width=".8"/><path d="M1468.2 735.3L1462.9 744.6" stroke="#0a0a0a" stroke-width="3" stroke-linecap="butt"/><path d="M1582.9 612.1A19.0 19.0 0 1 1 1603.1 612.1" fill="none" stroke="#0a0a0a" stroke-width="2"/><circle cx="1593" cy="596" r="14.4" fill="url(#kg)" stroke="#9a9a9a" stroke-width=".8"/><path d="M1593.7 597.3L1598.9 606.7" stroke="#0a0a0a" stroke-width="3" stroke-linecap="butt"/><path d="M1582.9 658.1A19.0 19.0 0 1 1 1603.1 658.1" fill="none" stroke="#f4f4f4" stroke-width="2"/><circle cx="1593" cy="642" r="14.4" fill="url(#kg)" stroke="#9a9a9a" stroke-width=".8"/><path d="M1592.2 643.3L1586.9 652.6" stroke="#0a0a0a" stroke-width="3" stroke-linecap="butt"/><path d="M1582.9 704.1A19.0 19.0 0 1 1 1603.1 704.1" fill="none" stroke="#f4f4f4" stroke-width="2"/><circle cx="1593" cy="688" r="14.4" fill="url(#kg)" stroke="#9a9a9a" stroke-width=".8"/><path d="M1592.2 689.3L1586.9 698.6" stroke="#0a0a0a" stroke-width="3" stroke-linecap="butt"/><path d="M1582.9 750.1A19.0 19.0 0 1 1 1603.1 750.1" fill="none" stroke="#f4f4f4" stroke-width="2"/><circle cx="1593" cy="734" r="14.4" fill="url(#kg)" stroke="#9a9a9a" stroke-width=".8"/><path d="M1592.2 735.3L1586.9 744.6" stroke="#0a0a0a" stroke-width="3" stroke-linecap="butt"/><path d="M1706.9 612.1A19.0 19.0 0 1 1 1727.1 612.1" fill="none" stroke="#0a0a0a" stroke-width="2"/><circle cx="1717" cy="596" r="14.4" fill="url(#kg)" stroke="#9a9a9a" stroke-width=".8"/><path d="M1717.7 597.3L1722.9 606.7" stroke="#0a0a0a" stroke-width="3" stroke-linecap="butt"/><path d="M1706.9 658.1A19.0 19.0 0 1 1 1727.1 658.1" fill="none" stroke="#f4f4f4" stroke-width="2"/><circle cx="1717" cy="642" r="14.4" fill="url(#kg)" stroke="#9a9a9a" stroke-width=".8"/><path d="M1716.2 643.3L1710.9 652.6" stroke="#0a0a0a" stroke-width="3" stroke-linecap="butt"/><path d="M1706.9 704.1A19.0 19.0 0 1 1 1727.1 704.1" fill="none" stroke="#f4f4f4" stroke-width="2"/><circle cx="1717" cy="688" r="14.4" fill="url(#kg)" stroke="#9a9a9a" stroke-width=".8"/><path d="M1716.2 689.3L1710.9 698.6" stroke="#0a0a0a" stroke-width="3" stroke-linecap="butt"/><path d="M1706.9 750.1A19.0 19.0 0 1 1 1727.1 750.1" fill="none" stroke="#f4f4f4" stroke-width="2"/><circle cx="1717" cy="734" r="14.4" fill="url(#kg)" stroke="#9a9a9a" stroke-width=".8"/><path d="M1716.2 735.3L1710.9 744.6" stroke="#0a0a0a" stroke-width="3" stroke-linecap="butt"/><path d="M1830.9 612.1A19.0 19.0 0 1 1 1851.1 612.1" fill="none" stroke="#f4f4f4" stroke-width="2"/><circle cx="1841" cy="596" r="14.4" fill="url(#kg)" stroke="#9a9a9a" stroke-width=".8"/><path d="M1840.2 597.3L1834.9 606.6" stroke="#0a0a0a" stroke-width="3" stroke-linecap="butt"/><path d="M1830.9 658.1A19.0 19.0 0 1 1 1851.1 658.1" fill="none" stroke="#f4f4f4" stroke-width="2"/><circle cx="1841" cy="642" r="14.4" fill="url(#kg)" stroke="#9a9a9a" stroke-width=".8"/><path d="M1840.2 643.3L1834.9 652.6" stroke="#0a0a0a" stroke-width="3" stroke-linecap="butt"/><path d="M1830.9 704.1A19.0 19.0 0 1 1 1851.1 704.1" fill="none" stroke="#f4f4f4" stroke-width="2"/><circle cx="1841" cy="688" r="14.4" fill="url(#kg)" stroke="#9a9a9a" stroke-width=".8"/><path d="M1840.2 689.3L1834.9 698.6" stroke="#0a0a0a" stroke-width="3" stroke-linecap="butt"/><path d="M1830.9 750.1A19.0 19.0 0 1 1 1851.1 750.1" fill="none" stroke="#f4f4f4" stroke-width="2"/><circle cx="1841" cy="734" r="14.4" fill="url(#kg)" stroke="#9a9a9a" stroke-width=".8"/><path d="M1840.2 735.3L1834.9 744.6" stroke="#0a0a0a" stroke-width="3" stroke-linecap="butt"/><path d="M1954.9 612.1A19.0 19.0 0 1 1 1975.1 612.1" fill="none" stroke="#f4f4f4" stroke-width="2"/><circle cx="1965" cy="596" r="14.4" fill="url(#kg)" stroke="#9a9a9a" stroke-width=".8"/><path d="M1964.2 597.3L1958.9 606.6" stroke="#0a0a0a" stroke-width="3" stroke-linecap="butt"/><path d="M1954.9 658.1A19.0 19.0 0 1 1 1975.1 658.1" fill="none" stroke="#f4f4f4" stroke-width="2"/><circle cx="1965" cy="642" r="14.4" fill="url(#kg)" stroke="#9a9a9a" stroke-width=".8"/><path d="M1964.2 643.3L1958.9 652.6" stroke="#0a0a0a" stroke-width="3" stroke-linecap="butt"/><path d="M1954.9 704.1A19.0 19.0 0 1 1 1975.1 704.1" fill="none" stroke="#f4f4f4" stroke-width="2"/><circle cx="1965" cy="688" r="14.4" fill="url(#kg)" stroke="#9a9a9a" stroke-width=".8"/><path d="M1964.2 689.3L1958.9 698.6" stroke="#0a0a0a" stroke-width="3" stroke-linecap="butt"/><path d="M1954.9 750.1A19.0 19.0 0 1 1 1975.1 750.1" fill="none" stroke="#f4f4f4" stroke-width="2"/><circle cx="1965" cy="734" r="14.4" fill="url(#kg)" stroke="#9a9a9a" stroke-width=".8"/><path d="M1964.2 735.3L1958.9 744.6" stroke="#0a0a0a" stroke-width="3" stroke-linecap="butt"/></svg></div></body></html>
